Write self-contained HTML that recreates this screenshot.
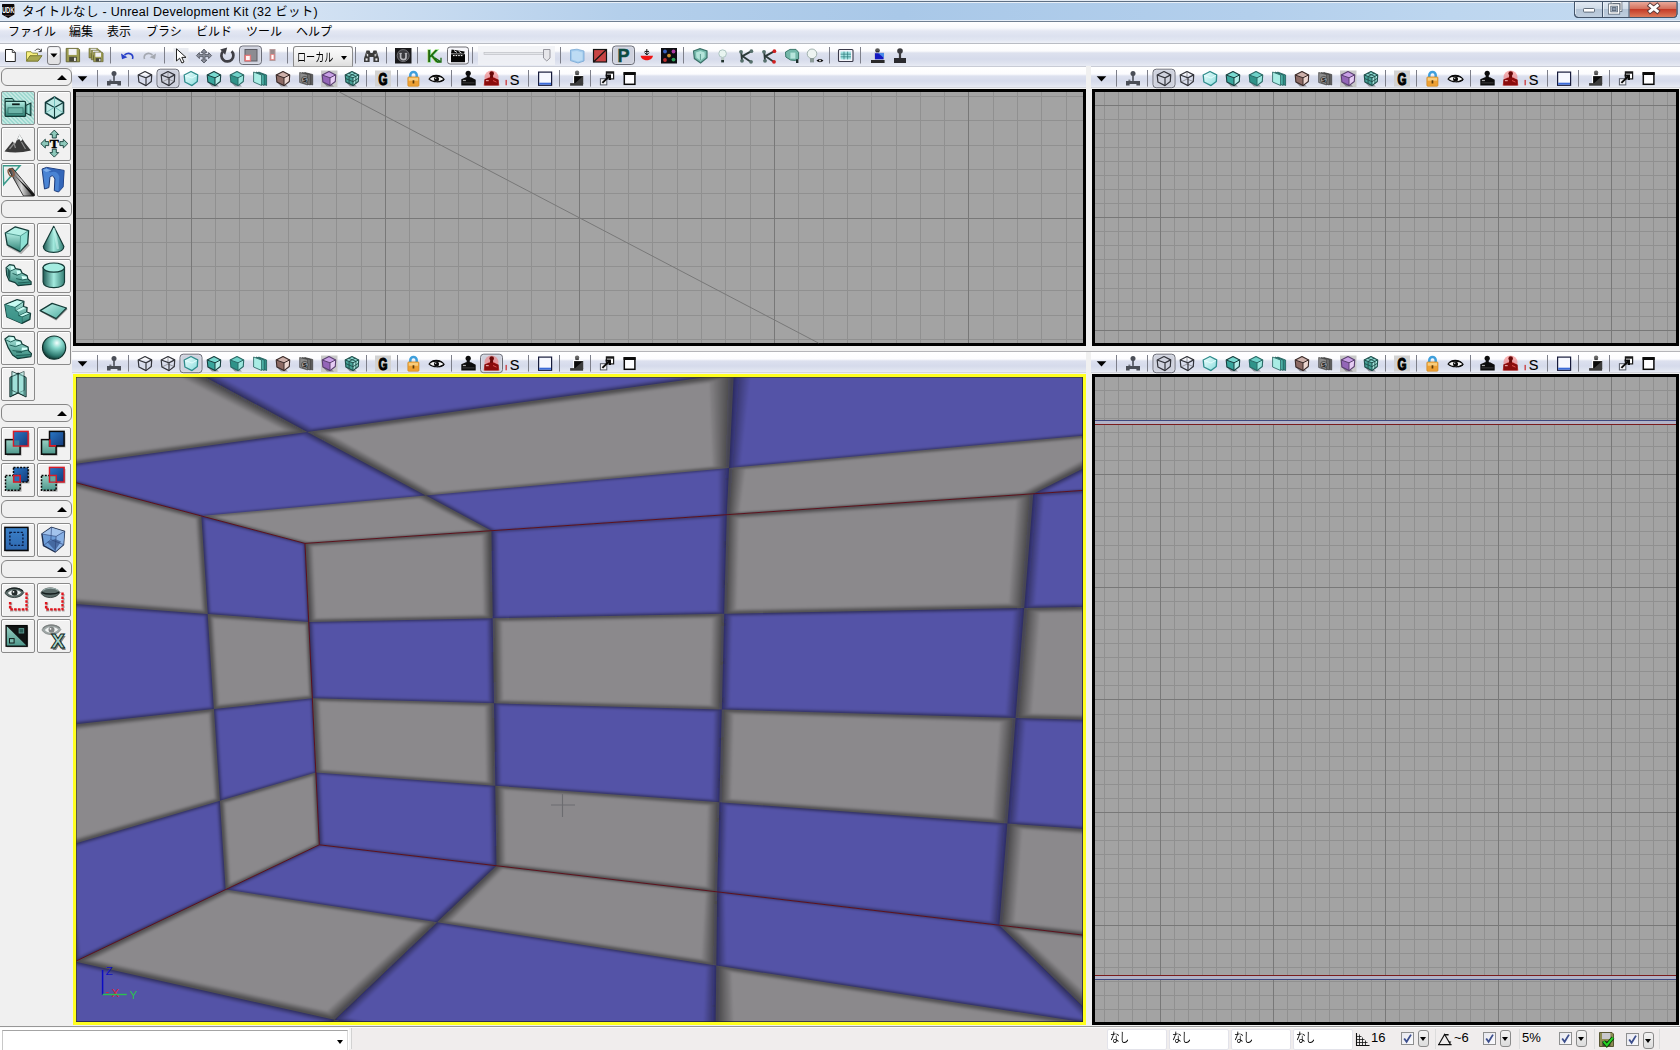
<!DOCTYPE html>
<html lang="ja"><head><meta charset="utf-8"><title>タイトルなし - Unreal Development Kit (32 ビット)</title>
<style>
html,body{margin:0;padding:0}
body{width:1680px;height:1050px;overflow:hidden;position:relative;background:#f0f0f0;font-family:"Liberation Sans","Noto Sans CJK JP",sans-serif;font-size:12px;color:#000}
.abs{position:absolute}
.t{position:absolute;white-space:nowrap;line-height:14px;font-size:12px}
#titlebar{left:0;top:0;width:1680px;height:22px;background:linear-gradient(90deg,#d9e6f5 0px,#d3e2f3 300px,#b4cfeb 620px,#a9c8e8 900px,#b3cfec 1250px,#bdd6ef 1450px,#c4daf0 1680px)}
#menubar{left:0;top:22px;width:1680px;height:21px;background:linear-gradient(180deg,#ffffff 0,#f8f9fc 6px,#e4e8f3 9px,#dce1ef 14px,#e1e6f2 18px,#eef0f7 21px)}
#toolbar{left:0;top:44px;width:1680px;height:22px;background:linear-gradient(180deg,#ffffff 0,#fbfbfd 7px,#dde1ee 9px,#d6dbeb 15px,#dfe3ef 19px,#e8ebf4 22px)}
.vtb{height:21px;background:linear-gradient(180deg,#ffffff 0,#fcfcfe 7px,#dde1ef 9px,#d5daeb 14px,#e0e4f0 18px,#eceef6 21px)}
.hdr{position:absolute;left:1px;width:69px;height:16px;border:1px solid #868686;border-radius:6px;background:#f0f0f0}
.hdr:after{content:"";position:absolute;left:55px;top:6px;border-left:5px solid transparent;border-right:5px solid transparent;border-bottom:5px solid #000}
.lb{position:absolute;width:32px;height:32px;border:1px solid #8a8a8a;border-radius:2px;background:#f1f1f1;box-shadow:inset 1px 1px 0 #fff}
.sbx{position:absolute;top:1029px;height:19px;width:58px;background:#fff;border:1px solid #e3e3ea;border-radius:2px}
.cb{position:absolute;top:1032px;width:11px;height:11px;border:1px solid #8e8f8f;background:linear-gradient(135deg,#e8e8ee,#fafafd)}
.dd{position:absolute;width:9px;height:15px;border:1px solid #8a8a8a;border-radius:3px;background:linear-gradient(180deg,#f4f4f4,#dcdcdc)}
.dd:after{content:"";position:absolute;left:1px;top:6px;border-left:3.5px solid transparent;border-right:3.5px solid transparent;border-top:4px solid #000}
</style></head><body>

<div class="abs" id="titlebar"></div>
<div class="abs" style="left:0;top:0;width:1680px;height:1px;background:#e3ebf4"></div>
<div class="abs" style="left:0;top:1px;width:1666px;height:1px;background:#5f7084"></div>
<div class="abs" style="left:0;top:2px;width:1680px;height:1px;background:#e9f0f8"></div>
<div class="abs" style="left:0;top:20px;width:1680px;height:1px;background:#e4edf7"></div>
<div class="abs" style="left:0;top:21px;width:1680px;height:1px;background:#6f7f91"></div>
<div class="t" id="title" style="left:22px;top:5px;font-size:12.5px;letter-spacing:0.28px">タイトルなし - Unreal Development Kit (32 ビット)</div>
<div class="abs" id="menubar"></div>
<div class="abs" style="left:0;top:43px;width:1680px;height:1px;background:#b9bcc4"></div>
<div class="t menu" id="m0" style="left:8px;top:25px;width:46px">ファイル</div>
<div class="t menu" id="m1" style="left:69px;top:25px;width:24px">編集</div>
<div class="t menu" id="m2" style="left:107px;top:25px;width:24px">表示</div>
<div class="t menu" id="m3" style="left:146px;top:25px;width:35px">ブラシ</div>
<div class="t menu" id="m4" style="left:196px;top:25px;width:35px">ビルド</div>
<div class="t menu" id="m5" style="left:246px;top:25px;width:35px">ツール</div>
<div class="t menu" id="m6" style="left:296px;top:25px;width:35px">ヘルプ</div>
<div class="abs" id="toolbar"></div>
<div class="abs" style="left:0;top:66px;width:1680px;height:1px;background:#c9ccd6"></div>
<div class="abs" style="left:0;top:67px;width:72px;height:959px;background:#f0f0f0"></div>
<div class="hdr" style="top:68px"></div>
<div class="hdr" style="top:200px"></div>
<div class="hdr" style="top:404px"></div>
<div class="hdr" style="top:500px"></div>
<div class="hdr" style="top:560px"></div>
<div class="lb" style="left:1px;top:91px;background:repeating-linear-gradient(45deg,#9fd9d0 0,#9fd9d0 1.4px,#c3e8e2 1.4px,#c3e8e2 2.8px);box-shadow:none"></div>
<div class="lb" style="left:37px;top:91px;"></div>
<div class="lb" style="left:1px;top:127px;"></div>
<div class="lb" style="left:37px;top:127px;"></div>
<div class="lb" style="left:1px;top:163px;"></div>
<div class="lb" style="left:37px;top:163px;"></div>
<div class="lb" style="left:1px;top:223px;"></div>
<div class="lb" style="left:37px;top:223px;"></div>
<div class="lb" style="left:1px;top:259px;"></div>
<div class="lb" style="left:37px;top:259px;"></div>
<div class="lb" style="left:1px;top:295px;"></div>
<div class="lb" style="left:37px;top:295px;"></div>
<div class="lb" style="left:1px;top:331px;"></div>
<div class="lb" style="left:37px;top:331px;"></div>
<div class="lb" style="left:1px;top:367px;"></div>
<div class="lb" style="left:1px;top:427px;"></div>
<div class="lb" style="left:37px;top:427px;"></div>
<div class="lb" style="left:1px;top:463px;"></div>
<div class="lb" style="left:37px;top:463px;"></div>
<div class="lb" style="left:1px;top:523px;"></div>
<div class="lb" style="left:37px;top:523px;"></div>
<div class="lb" style="left:1px;top:583px;"></div>
<div class="lb" style="left:37px;top:583px;"></div>
<div class="lb" style="left:1px;top:619px;"></div>
<div class="lb" style="left:37px;top:619px;"></div>
<div class="abs vtb" style="left:72px;top:67px;width:1015px"></div>
<div class="abs" style="left:72px;top:87px;width:1015px;height:1px;background:#d4d6de"></div>
<div class="abs vtb" style="left:1091px;top:67px;width:589px"></div>
<div class="abs" style="left:1091px;top:87px;width:589px;height:1px;background:#d4d6de"></div>
<div class="abs vtb" style="left:72px;top:352px;width:1015px"></div>
<div class="abs" style="left:72px;top:372px;width:1015px;height:1px;background:#d4d6de"></div>
<div class="abs vtb" style="left:1091px;top:352px;width:589px"></div>
<div class="abs" style="left:1091px;top:372px;width:589px;height:1px;background:#d4d6de"></div>
<div class="abs" style="left:1086px;top:66px;width:5px;height:960px;background:#f0f0f0"></div>
<div class="abs" style="left:72px;top:346px;width:1608px;height:5px;background:#f0f0f0"></div>
<div class="abs" style="left:72px;top:351px;width:1608px;height:1px;background:#b4b4b8"></div>
<svg class="abs" style="left:0;top:0" width="1680" height="1050" viewBox="0 0 1680 1050">
<defs><clipPath id="vp"><rect x="76" y="377" width="1007" height="645"/></clipPath><filter id="shb" filterUnits="userSpaceOnUse" x="66" y="367" width="1027" height="665"><feGaussianBlur stdDeviation="0.9"/></filter>
<linearGradient id="gT" x1="0" y1="0" x2="1" y2="1"><stop offset="0" stop-color="#c8f8f0"/><stop offset="1" stop-color="#4aa89c"/></linearGradient>
<linearGradient id="gTh" x1="0" y1="0" x2="1" y2="0"><stop offset="0" stop-color="#1f5a54"/><stop offset=".5" stop-color="#a2eade"/><stop offset="1" stop-color="#357f75"/></linearGradient>
<linearGradient id="gTv" x1="0" y1="0" x2="0" y2="1"><stop offset="0" stop-color="#b4eee4"/><stop offset="1" stop-color="#2f8276"/></linearGradient>
<radialGradient id="gSph" cx=".62" cy=".3" r=".75"><stop offset="0" stop-color="#f4fffe"/><stop offset=".3" stop-color="#86d8cc"/><stop offset=".75" stop-color="#2f7a70"/><stop offset="1" stop-color="#0c2c28"/></radialGradient>
<linearGradient id="gB" x1="0" y1="0" x2="1" y2="1"><stop offset="0" stop-color="#2a78c8"/><stop offset="1" stop-color="#143a78"/></linearGradient>
<linearGradient id="gB2" x1="0" y1="0" x2="0" y2="1"><stop offset="0" stop-color="#3a80c8"/><stop offset="1" stop-color="#2f68b0"/></linearGradient>
<linearGradient id="gTe" x1="0" y1="0" x2="0" y2="1"><stop offset="0" stop-color="#9ad0c4"/><stop offset="1" stop-color="#4e988c"/></linearGradient>
<linearGradient id="gLit" x1="0" y1="0" x2="1" y2="1"><stop offset="0" stop-color="#f0ffff"/><stop offset="1" stop-color="#8adcdc"/></linearGradient>
<linearGradient id="gClose" x1="0" y1="0" x2="0" y2="1"><stop offset="0" stop-color="#e9a99a"/><stop offset=".45" stop-color="#d4705c"/><stop offset=".5" stop-color="#c43c28"/><stop offset="1" stop-color="#dc7a5a"/></linearGradient>
<linearGradient id="gWb" x1="0" y1="0" x2="0" y2="1"><stop offset="0" stop-color="#e3ebf4"/><stop offset=".45" stop-color="#cfdbe8"/><stop offset=".5" stop-color="#b4c4d6"/><stop offset="1" stop-color="#c0cfdf"/></linearGradient>
<linearGradient id="gMet" x1="0" y1="0" x2="1" y2="0"><stop offset="0" stop-color="#303030"/><stop offset=".5" stop-color="#d8d8d8"/><stop offset="1" stop-color="#202020"/></linearGradient>
<filter id="bl1"><feGaussianBlur stdDeviation="0.6"/></filter>
<filter id="bl2"><feGaussianBlur stdDeviation="1.1"/></filter>
</defs>
<rect x="73" y="89" width="1013" height="257" fill="#000"/><rect x="76" y="92" width="1007" height="251" fill="#a3a3a3"/>
<path d="M93.5 92V343M118.5 92V343M142.5 92V343M166.5 92V343M215.5 92V343M239.5 92V343M263.5 92V343M288.5 92V343M312.5 92V343M336.5 92V343M361.5 92V343M409.5 92V343M434.5 92V343M458.5 92V343M482.5 92V343M507.5 92V343M531.5 92V343M555.5 92V343M604.5 92V343M628.5 92V343M652.5 92V343M677.5 92V343M701.5 92V343M725.5 92V343M750.5 92V343M798.5 92V343M823.5 92V343M847.5 92V343M871.5 92V343M896.5 92V343M920.5 92V343M944.5 92V343M993.5 92V343M1017.5 92V343M1041.5 92V343M1066.5 92V343M76 96.5H1083M76 120.5H1083M76 145.5H1083M76 169.5H1083M76 193.5H1083M76 242.5H1083M76 266.5H1083M76 290.5H1083M76 315.5H1083M76 339.5H1083" stroke="#909090" stroke-width="1" fill="none" shape-rendering="crispEdges"/>
<path d="M191.5 92V343M385.5 92V343M579.5 92V343M774.5 92V343M968.5 92V343M76 218.5H1083" stroke="#787878" stroke-width="1" fill="none" shape-rendering="crispEdges"/>
<line x1="338.9" y1="91.8" x2="818.4" y2="343" stroke="#787878" stroke-width="1"/>
<rect x="1092" y="89" width="587" height="257" fill="#000"/><rect x="1095" y="92" width="581" height="251" fill="#a3a3a3"/>
<path d="M1104.5 92V343M1118.5 92V343M1132.5 92V343M1146.5 92V343M1174.5 92V343M1188.5 92V343M1202.5 92V343M1216.5 92V343M1231.5 92V343M1245.5 92V343M1259.5 92V343M1287.5 92V343M1301.5 92V343M1315.5 92V343M1329.5 92V343M1343.5 92V343M1357.5 92V343M1371.5 92V343M1399.5 92V343M1414.5 92V343M1428.5 92V343M1442.5 92V343M1456.5 92V343M1470.5 92V343M1484.5 92V343M1512.5 92V343M1526.5 92V343M1540.5 92V343M1554.5 92V343M1568.5 92V343M1583.5 92V343M1597.5 92V343M1625.5 92V343M1639.5 92V343M1653.5 92V343M1667.5 92V343M1095 119.5H1676M1095 133.5H1676M1095 147.5H1676M1095 161.5H1676M1095 175.5H1676M1095 189.5H1676M1095 203.5H1676M1095 231.5H1676M1095 245.5H1676M1095 259.5H1676M1095 273.5H1676M1095 288.5H1676M1095 302.5H1676M1095 316.5H1676" stroke="#909090" stroke-width="1" fill="none" shape-rendering="crispEdges"/>
<path d="M1160.5 92V343M1273.5 92V343M1385.5 92V343M1498.5 92V343M1611.5 92V343M1095 105.5H1676M1095 217.5H1676M1095 330.5H1676" stroke="#787878" stroke-width="1" fill="none" shape-rendering="crispEdges"/>
<rect x="1092" y="374" width="587" height="651" fill="#000"/><rect x="1095" y="377" width="581" height="645" fill="#a3a3a3"/>
<path d="M1104.5 377V1022M1118.5 377V1022M1132.5 377V1022M1146.5 377V1022M1174.5 377V1022M1188.5 377V1022M1202.5 377V1022M1216.5 377V1022M1231.5 377V1022M1245.5 377V1022M1259.5 377V1022M1287.5 377V1022M1301.5 377V1022M1315.5 377V1022M1329.5 377V1022M1343.5 377V1022M1357.5 377V1022M1371.5 377V1022M1399.5 377V1022M1414.5 377V1022M1428.5 377V1022M1442.5 377V1022M1456.5 377V1022M1470.5 377V1022M1484.5 377V1022M1512.5 377V1022M1526.5 377V1022M1540.5 377V1022M1554.5 377V1022M1568.5 377V1022M1583.5 377V1022M1597.5 377V1022M1625.5 377V1022M1639.5 377V1022M1653.5 377V1022M1667.5 377V1022M1095 390.5H1676M1095 404.5H1676M1095 418.5H1676M1095 432.5H1676M1095 446.5H1676M1095 460.5H1676M1095 488.5H1676M1095 502.5H1676M1095 516.5H1676M1095 531.5H1676M1095 545.5H1676M1095 559.5H1676M1095 573.5H1676M1095 601.5H1676M1095 615.5H1676M1095 629.5H1676M1095 643.5H1676M1095 657.5H1676M1095 671.5H1676M1095 685.5H1676M1095 714.5H1676M1095 728.5H1676M1095 742.5H1676M1095 756.5H1676M1095 770.5H1676M1095 784.5H1676M1095 798.5H1676M1095 826.5H1676M1095 840.5H1676M1095 854.5H1676M1095 868.5H1676M1095 883.5H1676M1095 897.5H1676M1095 911.5H1676M1095 939.5H1676M1095 953.5H1676M1095 967.5H1676M1095 981.5H1676M1095 995.5H1676M1095 1009.5H1676" stroke="#909090" stroke-width="1" fill="none" shape-rendering="crispEdges"/>
<path d="M1160.5 377V1022M1273.5 377V1022M1385.5 377V1022M1498.5 377V1022M1611.5 377V1022M1095 474.5H1676M1095 587.5H1676M1095 699.5H1676M1095 812.5H1676M1095 925.5H1676" stroke="#787878" stroke-width="1" fill="none" shape-rendering="crispEdges"/>
<rect x="1095" y="421" width="581" height="3" fill="#b3b3c6"/><rect x="1095" y="420" width="581" height="1" fill="#3f487e"/><rect x="1095" y="424" width="581" height="1" fill="#7a1c1c"/>
<rect x="1095" y="976" width="581" height="3" fill="#b3b3c6"/><rect x="1095" y="975" width="581" height="1" fill="#7a1c1c"/><rect x="1095" y="979" width="581" height="1" fill="#3f487e"/>
<rect x="73" y="374" width="1013" height="651" fill="#ffff20"/>
<g clip-path="url(#vp)">
<path d="M305.0 543.4 L4593.5 251.4 L18327.3 -1173.7 L-6195.5 -1177.9Z" fill="#8b898c"/>
<path d="M201.3 516.0 L425.8 495.5 L307.3 431.9 L28.4 470.2ZM491.4 530.7 L726.8 514.7 L729.1 467.9 L425.8 495.5ZM307.3 431.9 L733.8 373.4 L748.3 82.5 L28.8 282.5ZM729.1 467.9 L1161.5 428.5 L1467.7 272.7 L733.8 373.4ZM1033.2 493.8 L1448.6 465.5 L1827.6 367.9 L1161.5 428.5Z" fill="#5453a7"/>
<path d="M319.3 844.8 L3916.1 1270.0 L18197.3 4025.8 L-6325.6 4021.5Z" fill="#8b898c"/>
<path d="M319.3 844.8 L496.5 865.7 L437.1 922.3 L225.7 889.6ZM74.9 961.6 L334.6 1019.8 L115.4 1228.2 L-208.2 1097.0ZM437.1 922.3 L716.3 965.5 L714.7 1104.9 L334.6 1019.8ZM717.1 891.8 L999.4 925.2 L1102.2 1025.2 L716.3 965.5Z" fill="#5453a7"/>
<path d="M305.0 543.4 L-6195.5 -1177.9 L-6325.6 4021.5 L319.3 844.8Z" fill="#8b898c"/>
<path d="M305.0 543.4 L201.3 516.0 L207.7 614.1 L308.7 621.9ZM312.3 698.2 L213.9 709.0 L219.9 800.8 L315.9 772.5ZM207.7 614.1 L40.9 601.4 L52.7 726.8 L213.9 709.0ZM219.9 800.8 L64.1 846.7 L74.9 961.6 L225.7 889.6Z" fill="#5453a7"/>
<path d="M305.0 543.4 L4593.5 251.4 L3916.1 1270.0 L319.3 844.8Z" fill="#8b898c"/>
<path d="M308.7 621.9 L492.7 618.3 L494.0 703.3 L312.3 698.2ZM315.9 772.5 L495.3 785.7 L496.5 865.7 L319.3 844.8ZM491.4 530.7 L726.8 514.7 L724.2 613.8 L492.7 618.3ZM494.0 703.3 L721.8 709.6 L719.4 802.2 L495.3 785.7ZM724.2 613.8 L1024.2 608.0 L1015.6 717.9 L721.8 709.6ZM719.4 802.2 L1007.4 823.5 L999.4 925.2 L717.1 891.8ZM1033.2 493.8 L1448.6 465.5 L1428.5 600.3 L1024.2 608.0ZM1015.6 717.9 L1409.2 728.9 L1390.9 851.8 L1007.4 823.5Z" fill="#5453a7"/>
<g filter="url(#shb)">
<path d="M305.0 543.4 L491.4 530.7 L425.8 495.5 L201.3 516.0ZM305.0 543.4 L491.1 530.7 L425.6 495.6 L201.6 516.0ZM28.4 470.2 L307.3 431.9 L28.8 282.5 L-317.1 378.7ZM28.4 470.1 L306.7 431.9 L28.8 282.9 L-316.2 378.8ZM425.8 495.5 L729.1 467.9 L733.8 373.4 L307.3 431.9ZM426.0 495.4 L728.7 467.9 L733.2 373.6 L307.8 432.0ZM726.8 514.7 L1033.2 493.8 L1161.5 428.5 L729.1 467.9ZM727.1 514.6 L1032.9 493.8 L1160.7 428.7 L729.5 467.9ZM733.8 373.4 L1467.7 272.7 L3158.1 -587.6 L748.3 82.5ZM734.4 373.2 L1467.1 272.6 L3146.6 -583.1 L749.5 82.8ZM225.7 889.6 L437.1 922.3 L334.6 1019.8 L74.9 961.6ZM225.8 889.6 L436.7 922.3 L334.4 1019.6 L75.4 961.6ZM496.5 865.7 L717.1 891.8 L716.3 965.5 L437.1 922.3ZM496.7 865.8 L716.9 891.9 L715.9 965.3 L437.4 922.2ZM334.6 1019.8 L714.7 1104.9 L710.5 1469.4 L115.4 1228.2ZM334.7 1020.0 L714.2 1105.0 L709.6 1468.4 L116.2 1228.0ZM716.3 965.5 L1102.2 1025.2 L1324.5 1241.5 L714.7 1104.9ZM716.6 965.6 L1101.8 1025.3 L1323.3 1240.9 L715.2 1104.8ZM999.4 925.2 L1373.3 969.4 L1670.4 1113.1 L1102.2 1025.2ZM999.8 925.3 L1373.1 969.5 L1669.2 1112.8 L1102.5 1025.1ZM308.7 621.9 L207.7 614.1 L213.9 709.0 L312.3 698.2ZM308.6 621.9 L207.8 614.2 L214.0 708.9 L312.2 698.1ZM315.9 772.5 L219.9 800.8 L225.7 889.6 L319.3 844.8ZM315.8 772.6 L220.0 800.8 L225.8 889.4 L319.2 844.8ZM201.3 516.0 L28.4 470.2 L40.9 601.4 L207.7 614.1ZM201.1 516.0 L28.7 470.4 L41.1 601.3 L207.5 614.0ZM213.9 709.0 L52.7 726.8 L64.1 846.7 L219.9 800.8ZM213.8 709.1 L53.0 726.9 L64.3 846.5 L219.8 800.7ZM64.1 846.7 L-232.8 934.3 L-208.2 1097.0 L74.9 961.6ZM63.9 846.9 L-232.3 934.3 L-207.8 1096.6 L74.7 961.6ZM305.0 543.4 L491.4 530.7 L492.7 618.3 L308.7 621.9ZM305.1 543.5 L491.2 530.8 L492.5 618.2 L308.9 621.8ZM312.3 698.2 L494.0 703.3 L495.3 785.7 L315.9 772.5ZM312.5 698.3 L493.8 703.3 L495.1 785.6 L316.0 772.4ZM492.7 618.3 L724.2 613.8 L721.8 709.6 L494.0 703.3ZM493.0 618.4 L724.0 613.9 L721.5 709.5 L494.3 703.2ZM495.3 785.7 L719.4 802.2 L717.1 891.8 L496.5 865.7ZM495.5 785.8 L719.1 802.3 L716.9 891.7 L496.7 865.7ZM726.8 514.7 L1033.2 493.8 L1024.2 608.0 L724.2 613.8ZM727.1 514.8 L1032.8 494.0 L1023.9 607.9 L724.5 613.7ZM721.8 709.6 L1015.6 717.9 L1007.4 823.5 L719.4 802.2ZM722.1 709.7 L1015.3 718.0 L1007.0 823.4 L719.7 802.2ZM1024.2 608.0 L1428.5 600.3 L1409.2 728.9 L1015.6 717.9ZM1024.6 608.2 L1427.9 600.4 L1408.8 728.7 L1016.0 717.7ZM1007.4 823.5 L1390.9 851.8 L1373.3 969.4 L999.4 925.2ZM1007.7 823.6 L1390.4 851.9 L1372.9 969.2 L999.7 925.1Z" fill="#0a0a16" fill-opacity="0.095" fill-rule="evenodd"/>
<path d="M201.3 516.0 L425.8 495.5 L307.3 431.9 L28.4 470.2ZM201.3 515.9 L425.5 495.5 L307.2 432.0 L28.8 470.2ZM491.4 530.7 L726.8 514.7 L729.1 467.9 L425.8 495.5ZM491.5 530.7 L726.6 514.7 L728.9 468.0 L426.0 495.5ZM307.3 431.9 L733.8 373.4 L748.3 82.5 L28.8 282.5ZM307.4 431.8 L733.4 373.4 L747.5 83.1 L29.5 282.6ZM729.1 467.9 L1161.5 428.5 L1467.7 272.7 L733.8 373.4ZM729.4 467.8 L1161.2 428.5 L1466.6 273.0 L734.2 373.5ZM1033.2 493.8 L1448.6 465.5 L1827.6 367.9 L1161.5 428.5ZM1033.5 493.8 L1448.4 465.5 L1826.5 368.1 L1161.7 428.6ZM319.3 844.8 L496.5 865.7 L437.1 922.3 L225.7 889.6ZM319.4 844.8 L496.3 865.8 L437.0 922.2 L225.9 889.5ZM74.9 961.6 L334.6 1019.8 L115.4 1228.2 L-208.2 1097.0ZM75.0 961.7 L334.2 1019.8 L115.4 1227.8 L-207.7 1096.9ZM437.1 922.3 L716.3 965.5 L714.7 1104.9 L334.6 1019.8ZM437.2 922.3 L716.0 965.5 L714.3 1104.7 L334.9 1019.7ZM717.1 891.8 L999.4 925.2 L1102.2 1025.2 L716.3 965.5ZM717.3 891.9 L999.2 925.2 L1101.7 1025.0 L716.5 965.4ZM305.0 543.4 L201.3 516.0 L207.7 614.1 L308.7 621.9ZM304.9 543.5 L201.4 516.1 L207.8 614.1 L308.6 621.8ZM312.3 698.2 L213.9 709.0 L219.9 800.8 L315.9 772.5ZM312.3 698.2 L214.0 709.1 L220.0 800.7 L315.8 772.4ZM207.7 614.1 L40.9 601.4 L52.7 726.8 L213.9 709.0ZM207.6 614.2 L41.0 601.5 L52.9 726.6 L213.8 708.9ZM219.9 800.8 L64.1 846.7 L74.9 961.6 L225.7 889.6ZM219.8 800.9 L64.2 846.8 L75.1 961.5 L225.6 889.5ZM308.7 621.9 L492.7 618.3 L494.0 703.3 L312.3 698.2ZM308.8 621.9 L492.6 618.4 L493.9 703.2 L312.4 698.1ZM315.9 772.5 L495.3 785.7 L496.5 865.7 L319.3 844.8ZM316.0 772.5 L495.1 785.7 L496.4 865.7 L319.4 844.8ZM491.4 530.7 L726.8 514.7 L724.2 613.8 L492.7 618.3ZM491.6 530.8 L726.6 514.8 L724.1 613.8 L492.9 618.2ZM494.0 703.3 L721.8 709.6 L719.4 802.2 L495.3 785.7ZM494.2 703.3 L721.6 709.7 L719.2 802.2 L495.4 785.6ZM724.2 613.8 L1024.2 608.0 L1015.6 717.9 L721.8 709.6ZM724.4 613.9 L1024.0 608.1 L1015.4 717.8 L722.0 709.6ZM719.4 802.2 L1007.4 823.5 L999.4 925.2 L717.1 891.8ZM719.6 802.3 L1007.1 823.5 L999.2 925.1 L717.3 891.8ZM1033.2 493.8 L1448.6 465.5 L1428.5 600.3 L1024.2 608.0ZM1033.4 493.9 L1448.2 465.7 L1428.1 600.2 L1024.5 608.0ZM1015.6 717.9 L1409.2 728.9 L1390.9 851.8 L1007.4 823.5ZM1015.9 717.9 L1408.9 728.9 L1390.6 851.7 L1007.6 823.4Z" fill="#06061c" fill-opacity="0.075" fill-rule="evenodd"/>
<path d="M305.0 543.4 L491.4 530.7 L425.8 495.5 L201.3 516.0ZM305.2 543.3 L490.5 530.7 L425.2 495.8 L202.4 516.0ZM28.4 470.2 L307.3 431.9 L28.8 282.5 L-317.1 378.7ZM28.4 469.9 L305.5 431.8 L28.8 283.9 L-314.4 378.9ZM425.8 495.5 L729.1 467.9 L733.8 373.4 L307.3 431.9ZM426.4 495.3 L727.9 467.8 L731.9 374.2 L309.0 432.1ZM726.8 514.7 L1033.2 493.8 L1161.5 428.5 L729.1 467.9ZM727.7 514.5 L1032.3 493.8 L1159.0 429.0 L730.3 468.0ZM733.8 373.4 L1467.7 272.7 L3158.1 -587.6 L748.3 82.5ZM735.7 372.7 L1466.0 272.3 L3121.0 -572.9 L752.1 83.5ZM225.7 889.6 L437.1 922.3 L334.6 1019.8 L74.9 961.6ZM225.9 889.8 L436.0 922.4 L334.0 1019.1 L76.4 961.5ZM496.5 865.7 L717.1 891.8 L716.3 965.5 L437.1 922.3ZM497.0 866.0 L716.3 891.9 L715.1 965.0 L438.2 922.1ZM334.6 1019.8 L714.7 1104.9 L710.5 1469.4 L115.4 1228.2ZM335.1 1020.5 L713.0 1105.2 L707.5 1466.0 L118.1 1227.6ZM716.3 965.5 L1102.2 1025.2 L1324.5 1241.5 L714.7 1104.9ZM717.4 966.0 L1101.1 1025.4 L1320.5 1239.7 L716.3 1104.6ZM999.4 925.2 L1373.3 969.4 L1670.4 1113.1 L1102.2 1025.2ZM1000.8 925.6 L1372.5 969.6 L1666.4 1112.0 L1103.3 1025.0ZM308.7 621.9 L207.7 614.1 L213.9 709.0 L312.3 698.2ZM308.4 622.1 L208.1 614.5 L214.3 708.6 L312.0 697.9ZM315.9 772.5 L219.9 800.8 L225.7 889.6 L319.3 844.8ZM315.6 772.8 L220.3 801.0 L226.1 889.1 L319.0 844.7ZM201.3 516.0 L28.4 470.2 L40.9 601.4 L207.7 614.1ZM200.8 516.2 L29.3 470.9 L41.6 601.0 L207.2 613.8ZM213.9 709.0 L52.7 726.8 L64.1 846.7 L219.9 800.8ZM213.5 709.4 L53.5 727.1 L64.7 846.1 L219.5 800.6ZM64.1 846.7 L-232.8 934.3 L-208.2 1097.0 L74.9 961.6ZM63.4 847.3 L-231.2 934.4 L-206.8 1095.7 L74.2 961.6ZM305.0 543.4 L491.4 530.7 L492.7 618.3 L308.7 621.9ZM305.6 543.7 L490.7 531.1 L492.0 618.0 L309.3 621.6ZM312.3 698.2 L494.0 703.3 L495.3 785.7 L315.9 772.5ZM312.9 698.4 L493.3 703.5 L494.6 785.4 L316.4 772.2ZM492.7 618.3 L724.2 613.8 L721.8 709.6 L494.0 703.3ZM493.5 618.6 L723.3 614.2 L720.9 709.3 L494.7 703.0ZM495.3 785.7 L719.4 802.2 L717.1 891.8 L496.5 865.7ZM496.0 786.0 L718.5 802.5 L716.3 891.4 L497.2 865.5ZM726.8 514.7 L1033.2 493.8 L1024.2 608.0 L724.2 613.8ZM727.7 515.0 L1031.9 494.3 L1023.1 607.7 L725.2 613.5ZM721.8 709.6 L1015.6 717.9 L1007.4 823.5 L719.4 802.2ZM722.7 710.0 L1014.4 718.2 L1006.2 823.0 L720.3 802.0ZM1024.2 608.0 L1428.5 600.3 L1409.2 728.9 L1015.6 717.9ZM1025.4 608.4 L1426.7 600.7 L1407.7 728.4 L1016.8 717.5ZM1007.4 823.5 L1390.9 851.8 L1373.3 969.4 L999.4 925.2ZM1008.5 823.9 L1389.3 852.1 L1371.9 968.8 L1000.5 925.0Z" fill="#0a0a16" fill-opacity="0.095" fill-rule="evenodd"/>
<path d="M201.3 516.0 L425.8 495.5 L307.3 431.9 L28.4 470.2ZM201.4 515.8 L425.0 495.5 L306.9 432.3 L29.5 470.3ZM491.4 530.7 L726.8 514.7 L729.1 467.9 L425.8 495.5ZM491.8 530.6 L726.2 514.7 L728.3 468.1 L426.6 495.6ZM307.3 431.9 L733.8 373.4 L748.3 82.5 L28.8 282.5ZM307.7 431.6 L732.6 373.3 L745.7 84.6 L31.0 282.8ZM729.1 467.9 L1161.5 428.5 L1467.7 272.7 L733.8 373.4ZM729.9 467.7 L1160.7 428.4 L1464.1 273.6 L735.1 373.6ZM1033.2 493.8 L1448.6 465.5 L1827.6 367.9 L1161.5 428.5ZM1034.2 493.7 L1448.0 465.5 L1824.2 368.4 L1162.3 428.6ZM319.3 844.8 L496.5 865.7 L437.1 922.3 L225.7 889.6ZM319.5 844.9 L495.9 865.8 L436.7 922.0 L226.4 889.5ZM74.9 961.6 L334.6 1019.8 L115.4 1228.2 L-208.2 1097.0ZM75.0 962.0 L333.5 1019.9 L115.2 1227.0 L-206.6 1096.8ZM437.1 922.3 L716.3 965.5 L714.7 1104.9 L334.6 1019.8ZM437.5 922.5 L715.5 965.6 L713.6 1104.2 L335.6 1019.6ZM717.1 891.8 L999.4 925.2 L1102.2 1025.2 L716.3 965.5ZM717.7 892.0 L998.8 925.3 L1100.8 1024.7 L717.0 965.4ZM305.0 543.4 L201.3 516.0 L207.7 614.1 L308.7 621.9ZM304.8 543.6 L201.6 516.3 L208.0 613.9 L308.5 621.7ZM312.3 698.2 L213.9 709.0 L219.9 800.8 L315.9 772.5ZM312.2 698.4 L214.2 709.2 L220.2 800.5 L315.7 772.3ZM207.7 614.1 L40.9 601.4 L52.7 726.8 L213.9 709.0ZM207.4 614.3 L41.4 601.7 L53.2 726.4 L213.6 708.8ZM219.9 800.8 L64.1 846.7 L74.9 961.6 L225.7 889.6ZM219.6 801.1 L64.6 846.9 L75.4 961.1 L225.4 889.5ZM308.7 621.9 L492.7 618.3 L494.0 703.3 L312.3 698.2ZM309.1 622.0 L492.3 618.5 L493.6 703.0 L312.7 698.0ZM315.9 772.5 L495.3 785.7 L496.5 865.7 L319.3 844.8ZM316.3 772.7 L494.8 785.9 L496.0 865.5 L319.7 844.7ZM491.4 530.7 L726.8 514.7 L724.2 613.8 L492.7 618.3ZM491.9 530.9 L726.2 515.0 L723.6 613.6 L493.2 618.1ZM494.0 703.3 L721.8 709.6 L719.4 802.2 L495.3 785.7ZM494.5 703.5 L721.2 709.8 L718.8 802.0 L495.7 785.5ZM724.2 613.8 L1024.2 608.0 L1015.6 717.9 L721.8 709.6ZM724.8 614.1 L1023.4 608.3 L1014.9 717.6 L722.4 709.4ZM719.4 802.2 L1007.4 823.5 L999.4 925.2 L717.1 891.8ZM720.0 802.5 L1006.6 823.7 L998.7 924.9 L717.7 891.7ZM1033.2 493.8 L1448.6 465.5 L1428.5 600.3 L1024.2 608.0ZM1034.0 494.0 L1447.4 465.9 L1427.4 600.0 L1025.1 607.8ZM1015.6 717.9 L1409.2 728.9 L1390.9 851.8 L1007.4 823.5ZM1016.4 718.1 L1408.1 729.1 L1389.9 851.4 L1008.1 823.3Z" fill="#06061c" fill-opacity="0.075" fill-rule="evenodd"/>
<path d="M305.0 543.4 L491.4 530.7 L425.8 495.5 L201.3 516.0ZM305.5 543.2 L489.6 530.6 L424.6 496.0 L203.5 516.1ZM28.4 470.2 L307.3 431.9 L28.8 282.5 L-317.1 378.7ZM28.4 469.6 L303.8 431.6 L28.8 285.2 L-311.7 379.2ZM425.8 495.5 L729.1 467.9 L733.8 373.4 L307.3 431.9ZM427.0 495.0 L726.7 467.7 L730.0 374.9 L310.8 432.2ZM726.8 514.7 L1033.2 493.8 L1161.5 428.5 L729.1 467.9ZM728.6 514.3 L1031.4 493.7 L1156.6 429.5 L731.6 468.1ZM733.8 373.4 L1467.7 272.7 L3158.1 -587.6 L748.3 82.5ZM737.6 371.9 L1464.3 271.8 L3085.1 -558.7 L755.8 84.4ZM225.7 889.6 L437.1 922.3 L334.6 1019.8 L74.9 961.6ZM226.2 890.1 L434.9 922.5 L333.4 1018.4 L77.8 961.3ZM496.5 865.7 L717.1 891.8 L716.3 965.5 L437.1 922.3ZM497.5 866.2 L715.4 892.0 L714.0 964.5 L439.3 922.0ZM334.6 1019.8 L714.7 1104.9 L710.5 1469.4 L115.4 1228.2ZM335.7 1021.2 L711.4 1105.6 L704.7 1462.5 L120.7 1227.1ZM716.3 965.5 L1102.2 1025.2 L1324.5 1241.5 L714.7 1104.9ZM718.5 966.5 L1099.9 1025.6 L1316.6 1237.9 L717.9 1104.2ZM999.4 925.2 L1373.3 969.4 L1670.4 1113.1 L1102.2 1025.2ZM1002.1 926.0 L1371.7 969.7 L1662.5 1110.9 L1104.4 1024.7ZM308.7 621.9 L207.7 614.1 L213.9 709.0 L312.3 698.2ZM308.2 622.3 L208.6 614.9 L214.7 708.3 L311.8 697.7ZM315.9 772.5 L219.9 800.8 L225.7 889.6 L319.3 844.8ZM315.4 773.1 L220.8 801.1 L226.5 888.6 L318.8 844.5ZM201.3 516.0 L28.4 470.2 L40.9 601.4 L207.7 614.1ZM200.4 516.4 L30.1 471.6 L42.3 600.6 L206.8 613.4ZM213.9 709.0 L52.7 726.8 L64.1 846.7 L219.9 800.8ZM213.1 709.8 L54.3 727.4 L65.4 845.5 L219.0 800.4ZM64.1 846.7 L-232.8 934.3 L-208.2 1097.0 L74.9 961.6ZM62.7 848.0 L-229.7 934.6 L-205.5 1094.5 L73.5 961.5ZM305.0 543.4 L491.4 530.7 L492.7 618.3 L308.7 621.9ZM306.1 543.9 L490.0 531.4 L491.3 617.7 L309.8 621.3ZM312.3 698.2 L494.0 703.3 L495.3 785.7 L315.9 772.5ZM313.5 698.7 L492.6 703.8 L493.9 785.0 L317.0 772.0ZM492.7 618.3 L724.2 613.8 L721.8 709.6 L494.0 703.3ZM494.2 618.9 L722.4 614.5 L720.0 708.9 L495.4 702.7ZM495.3 785.7 L719.4 802.2 L717.1 891.8 L496.5 865.7ZM496.7 786.4 L717.6 802.7 L715.4 891.0 L497.9 865.4ZM726.8 514.7 L1033.2 493.8 L1024.2 608.0 L724.2 613.8ZM728.6 515.3 L1030.7 494.8 L1021.9 607.3 L726.1 613.1ZM721.8 709.6 L1015.6 717.9 L1007.4 823.5 L719.4 802.2ZM723.6 710.3 L1013.2 718.5 L1005.1 822.6 L721.2 801.7ZM1024.2 608.0 L1428.5 600.3 L1409.2 728.9 L1015.6 717.9ZM1026.6 608.8 L1425.0 601.2 L1406.2 727.9 L1018.0 717.2ZM1007.4 823.5 L1390.9 851.8 L1373.3 969.4 L999.4 925.2ZM1009.6 824.4 L1387.7 852.4 L1370.4 968.2 L1001.7 924.8Z" fill="#0a0a16" fill-opacity="0.095" fill-rule="evenodd"/>
<path d="M201.3 516.0 L425.8 495.5 L307.3 431.9 L28.4 470.2ZM201.6 515.7 L424.2 495.4 L306.5 432.6 L30.6 470.3ZM491.4 530.7 L726.8 514.7 L729.1 467.9 L425.8 495.5ZM492.1 530.5 L725.6 514.6 L727.4 468.3 L427.4 495.6ZM307.3 431.9 L733.8 373.4 L748.3 82.5 L28.8 282.5ZM308.1 431.3 L731.3 373.1 L743.1 86.6 L33.1 283.1ZM729.1 467.9 L1161.5 428.5 L1467.7 272.7 L733.8 373.4ZM730.8 467.5 L1159.9 428.3 L1460.7 274.6 L736.3 373.7ZM1033.2 493.8 L1448.6 465.5 L1827.6 367.9 L1161.5 428.5ZM1035.3 493.5 L1447.5 465.4 L1821.0 368.9 L1163.1 428.7ZM319.3 844.8 L496.5 865.7 L437.1 922.3 L225.7 889.6ZM319.7 845.0 L495.4 865.8 L436.3 921.8 L227.1 889.4ZM74.9 961.6 L334.6 1019.8 L115.4 1228.2 L-208.2 1097.0ZM75.0 962.3 L332.5 1020.1 L115.1 1225.9 L-205.1 1096.5ZM437.1 922.3 L716.3 965.5 L714.7 1104.9 L334.6 1019.8ZM437.8 922.8 L714.8 965.7 L712.5 1103.5 L336.6 1019.5ZM717.1 891.8 L999.4 925.2 L1102.2 1025.2 L716.3 965.5ZM718.3 892.2 L998.2 925.4 L1099.4 1024.2 L717.8 965.3ZM305.0 543.4 L201.3 516.0 L207.7 614.1 L308.7 621.9ZM304.6 543.7 L201.9 516.6 L208.2 613.7 L308.3 621.5ZM312.3 698.2 L213.9 709.0 L219.9 800.8 L315.9 772.5ZM312.0 698.6 L214.5 709.4 L220.4 800.2 L315.5 772.2ZM207.7 614.1 L40.9 601.4 L52.7 726.8 L213.9 709.0ZM207.1 614.5 L41.9 602.0 L53.7 726.1 L213.3 708.6ZM219.9 800.8 L64.1 846.7 L74.9 961.6 L225.7 889.6ZM219.4 801.3 L65.1 847.0 L75.8 960.7 L225.1 889.4ZM308.7 621.9 L492.7 618.3 L494.0 703.3 L312.3 698.2ZM309.5 622.2 L491.8 618.7 L493.1 702.8 L313.1 697.8ZM315.9 772.5 L495.3 785.7 L496.5 865.7 L319.3 844.8ZM316.6 772.8 L494.4 786.0 L495.6 865.3 L320.1 844.5ZM491.4 530.7 L726.8 514.7 L724.2 613.8 L492.7 618.3ZM492.4 531.1 L725.5 515.3 L723.0 613.4 L493.7 617.9ZM494.0 703.3 L721.8 709.6 L719.4 802.2 L495.3 785.7ZM495.0 703.7 L720.6 710.0 L718.3 801.7 L496.2 785.4ZM724.2 613.8 L1024.2 608.0 L1015.6 717.9 L721.8 709.6ZM725.4 614.3 L1022.6 608.6 L1014.1 717.3 L723.0 709.2ZM719.4 802.2 L1007.4 823.5 L999.4 925.2 L717.1 891.8ZM720.6 802.7 L1005.8 823.9 L997.9 924.6 L718.3 891.6ZM1033.2 493.8 L1448.6 465.5 L1428.5 600.3 L1024.2 608.0ZM1034.8 494.3 L1446.2 466.3 L1426.3 599.7 L1025.9 607.5ZM1015.6 717.9 L1409.2 728.9 L1390.9 851.8 L1007.4 823.5ZM1017.2 718.4 L1407.0 729.4 L1388.9 851.1 L1008.9 823.1Z" fill="#06061c" fill-opacity="0.075" fill-rule="evenodd"/>
<path d="M305.0 543.4 L491.4 530.7 L425.8 495.5 L201.3 516.0ZM305.9 543.0 L488.5 530.6 L423.8 496.3 L204.9 516.2ZM28.4 470.2 L307.3 431.9 L28.8 282.5 L-317.1 378.7ZM28.4 469.2 L301.6 431.5 L28.8 286.8 L-308.3 379.5ZM425.8 495.5 L729.1 467.9 L733.8 373.4 L307.3 431.9ZM427.8 494.7 L725.1 467.6 L727.7 375.9 L313.0 432.4ZM726.8 514.7 L1033.2 493.8 L1161.5 428.5 L729.1 467.9ZM729.8 514.1 L1030.2 493.6 L1153.5 430.1 L733.1 468.2ZM733.8 373.4 L1467.7 272.7 L3158.1 -587.6 L748.3 82.5ZM740.1 370.9 L1462.2 271.3 L3040.7 -541.1 L760.5 85.7ZM225.7 889.6 L437.1 922.3 L334.6 1019.8 L74.9 961.6ZM226.5 890.5 L433.5 922.7 L332.6 1017.5 L79.6 961.1ZM496.5 865.7 L717.1 891.8 L716.3 965.5 L437.1 922.3ZM498.2 866.5 L714.3 892.1 L712.6 963.8 L440.6 921.9ZM334.6 1019.8 L714.7 1104.9 L710.5 1469.4 L115.4 1228.2ZM336.5 1022.1 L709.3 1106.0 L701.1 1458.2 L124.0 1226.4ZM716.3 965.5 L1102.2 1025.2 L1324.5 1241.5 L714.7 1104.9ZM720.0 967.1 L1098.5 1025.9 L1311.7 1235.7 L720.0 1103.8ZM999.4 925.2 L1373.3 969.4 L1670.4 1113.1 L1102.2 1025.2ZM1003.9 926.5 L1370.7 969.9 L1657.6 1109.5 L1105.8 1024.4ZM308.7 621.9 L207.7 614.1 L213.9 709.0 L312.3 698.2ZM307.8 622.7 L209.2 615.3 L215.2 707.8 L311.4 697.4ZM315.9 772.5 L219.9 800.8 L225.7 889.6 L319.3 844.8ZM315.0 773.5 L221.3 801.4 L226.9 887.9 L318.4 844.4ZM201.3 516.0 L28.4 470.2 L40.9 601.4 L207.7 614.1ZM199.9 516.7 L31.2 472.4 L43.2 600.1 L206.2 612.9ZM213.9 709.0 L52.7 726.8 L64.1 846.7 L219.9 800.8ZM212.6 710.2 L55.3 727.9 L66.3 844.7 L218.5 800.1ZM64.1 846.7 L-232.8 934.3 L-208.2 1097.0 L74.9 961.6ZM61.9 848.7 L-227.7 934.7 L-203.8 1093.0 L72.6 961.4ZM305.0 543.4 L491.4 530.7 L492.7 618.3 L308.7 621.9ZM306.9 544.2 L489.1 531.9 L490.4 617.4 L310.5 620.9ZM312.3 698.2 L494.0 703.3 L495.3 785.7 L315.9 772.5ZM314.2 699.1 L491.8 704.1 L493.0 784.6 L317.7 771.8ZM492.7 618.3 L724.2 613.8 L721.8 709.6 L494.0 703.3ZM495.1 619.2 L721.3 615.0 L718.9 708.5 L496.3 702.4ZM495.3 785.7 L719.4 802.2 L717.1 891.8 L496.5 865.7ZM497.6 786.8 L716.5 803.1 L714.3 890.5 L498.7 865.1ZM726.8 514.7 L1033.2 493.8 L1024.2 608.0 L724.2 613.8ZM729.8 515.6 L1029.1 495.4 L1020.4 606.9 L727.2 612.7ZM721.8 709.6 L1015.6 717.9 L1007.4 823.5 L719.4 802.2ZM724.7 710.8 L1011.7 719.0 L1003.7 822.0 L722.3 801.4ZM1024.2 608.0 L1428.5 600.3 L1409.2 728.9 L1015.6 717.9ZM1028.1 609.2 L1422.9 601.8 L1404.2 727.3 L1019.6 716.7ZM1007.4 823.5 L1390.9 851.8 L1373.3 969.4 L999.4 925.2ZM1011.0 824.9 L1385.6 852.8 L1368.6 967.5 L1003.1 924.5Z" fill="#0a0a16" fill-opacity="0.095" fill-rule="evenodd"/>
<path d="M201.3 516.0 L425.8 495.5 L307.3 431.9 L28.4 470.2ZM201.8 515.6 L423.2 495.4 L306.0 433.0 L31.9 470.4ZM491.4 530.7 L726.8 514.7 L729.1 467.9 L425.8 495.5ZM492.6 530.4 L724.8 514.6 L726.4 468.6 L428.4 495.7ZM307.3 431.9 L733.8 373.4 L748.3 82.5 L28.8 282.5ZM308.6 430.9 L729.8 372.9 L739.8 89.2 L35.8 283.4ZM729.1 467.9 L1161.5 428.5 L1467.7 272.7 L733.8 373.4ZM731.8 467.2 L1158.9 428.2 L1456.3 275.7 L737.8 373.9ZM1033.2 493.8 L1448.6 465.5 L1827.6 367.9 L1161.5 428.5ZM1036.6 493.3 L1446.8 465.3 L1816.9 369.6 L1164.1 428.9ZM319.3 844.8 L496.5 865.7 L437.1 922.3 L225.7 889.6ZM320.0 845.2 L494.7 865.9 L435.8 921.4 L228.0 889.4ZM74.9 961.6 L334.6 1019.8 L115.4 1228.2 L-208.2 1097.0ZM75.1 962.7 L331.2 1020.3 L114.9 1224.4 L-203.2 1096.3ZM437.1 922.3 L716.3 965.5 L714.7 1104.9 L334.6 1019.8ZM438.3 923.1 L713.8 965.8 L711.2 1102.6 L337.9 1019.3ZM717.1 891.8 L999.4 925.2 L1102.2 1025.2 L716.3 965.5ZM719.0 892.5 L997.5 925.5 L1097.7 1023.6 L718.7 965.1ZM305.0 543.4 L201.3 516.0 L207.7 614.1 L308.7 621.9ZM304.4 543.9 L202.3 517.0 L208.6 613.5 L308.1 621.2ZM312.3 698.2 L213.9 709.0 L219.9 800.8 L315.9 772.5ZM311.8 698.8 L214.9 709.6 L220.7 799.8 L315.3 772.1ZM207.7 614.1 L40.9 601.4 L52.7 726.8 L213.9 709.0ZM206.8 614.8 L42.6 602.5 L54.2 725.6 L212.9 708.4ZM219.9 800.8 L64.1 846.7 L74.9 961.6 L225.7 889.6ZM219.0 801.7 L65.7 847.2 L76.3 960.1 L224.8 889.3ZM308.7 621.9 L492.7 618.3 L494.0 703.3 L312.3 698.2ZM310.0 622.4 L491.2 619.0 L492.5 702.6 L313.5 697.6ZM315.9 772.5 L495.3 785.7 L496.5 865.7 L319.3 844.8ZM317.1 773.1 L493.8 786.2 L495.0 865.0 L320.5 844.4ZM491.4 530.7 L726.8 514.7 L724.2 613.8 L492.7 618.3ZM493.0 531.3 L724.8 515.6 L722.3 613.1 L494.3 617.6ZM494.0 703.3 L721.8 709.6 L719.4 802.2 L495.3 785.7ZM495.6 703.9 L719.8 710.3 L717.5 801.4 L496.8 785.2ZM724.2 613.8 L1024.2 608.0 L1015.6 717.9 L721.8 709.6ZM726.2 614.5 L1021.6 608.9 L1013.2 717.0 L723.7 709.0ZM719.4 802.2 L1007.4 823.5 L999.4 925.2 L717.1 891.8ZM721.3 803.1 L1004.8 824.1 L997.0 924.2 L719.0 891.4ZM1033.2 493.8 L1448.6 465.5 L1428.5 600.3 L1024.2 608.0ZM1035.8 494.5 L1444.7 466.8 L1425.0 599.3 L1026.9 607.2ZM1015.6 717.9 L1409.2 728.9 L1390.9 851.8 L1007.4 823.5ZM1018.1 718.7 L1405.6 729.7 L1387.6 850.6 L1009.9 822.9Z" fill="#06061c" fill-opacity="0.075" fill-rule="evenodd"/>
<path d="M305.0 543.4 L491.4 530.7 L425.8 495.5 L201.3 516.0ZM306.4 542.9 L487.1 530.5 L422.9 496.7 L206.6 516.2ZM28.4 470.2 L307.3 431.9 L28.8 282.5 L-317.1 378.7ZM28.5 468.7 L298.9 431.2 L28.8 288.7 L-304.3 379.8ZM425.8 495.5 L729.1 467.9 L733.8 373.4 L307.3 431.9ZM428.7 494.4 L723.2 467.4 L724.9 377.0 L315.6 432.7ZM726.8 514.7 L1033.2 493.8 L1161.5 428.5 L729.1 467.9ZM731.2 513.8 L1028.9 493.5 L1149.9 430.8 L734.9 468.4ZM733.8 373.4 L1467.7 272.7 L3158.1 -587.6 L748.3 82.5ZM743.0 369.8 L1459.7 270.6 L2989.5 -520.8 L766.0 87.2ZM225.7 889.6 L437.1 922.3 L334.6 1019.8 L74.9 961.6ZM226.9 891.0 L431.8 922.8 L331.8 1016.5 L81.8 960.9ZM496.5 865.7 L717.1 891.8 L716.3 965.5 L437.1 922.3ZM499.0 866.9 L713.0 892.3 L711.0 963.1 L442.3 921.7ZM334.6 1019.8 L714.7 1104.9 L710.5 1469.4 L115.4 1228.2ZM337.4 1023.1 L706.8 1106.5 L696.9 1453.2 L128.0 1225.6ZM716.3 965.5 L1102.2 1025.2 L1324.5 1241.5 L714.7 1104.9ZM721.7 967.9 L1096.9 1026.3 L1305.8 1233.0 L722.4 1103.3ZM999.4 925.2 L1373.3 969.4 L1670.4 1113.1 L1102.2 1025.2ZM1006.0 927.0 L1369.5 970.2 L1651.8 1107.9 L1107.4 1024.1ZM308.7 621.9 L207.7 614.1 L213.9 709.0 L312.3 698.2ZM307.4 623.0 L209.9 615.9 L215.8 707.2 L311.0 697.1ZM315.9 772.5 L219.9 800.8 L225.7 889.6 L319.3 844.8ZM314.6 774.1 L221.9 801.7 L227.5 887.2 L318.0 844.2ZM201.3 516.0 L28.4 470.2 L40.9 601.4 L207.7 614.1ZM199.2 517.1 L32.5 473.4 L44.3 599.5 L205.5 612.4ZM213.9 709.0 L52.7 726.8 L64.1 846.7 L219.9 800.8ZM212.0 710.8 L56.4 728.4 L67.3 843.8 L217.8 799.8ZM64.1 846.7 L-232.8 934.3 L-208.2 1097.0 L74.9 961.6ZM60.9 849.7 L-225.3 935.0 L-201.9 1091.2 L71.5 961.3ZM305.0 543.4 L491.4 530.7 L492.7 618.3 L308.7 621.9ZM307.8 544.6 L488.0 532.4 L489.3 616.9 L311.4 620.5ZM312.3 698.2 L494.0 703.3 L495.3 785.7 L315.9 772.5ZM315.1 699.5 L490.7 704.5 L492.0 784.1 L318.5 771.4ZM492.7 618.3 L724.2 613.8 L721.8 709.6 L494.0 703.3ZM496.2 619.7 L719.9 615.5 L717.6 708.0 L497.4 702.0ZM495.3 785.7 L719.4 802.2 L717.1 891.8 L496.5 865.7ZM498.6 787.3 L715.2 803.4 L713.1 889.9 L499.7 864.8ZM726.8 514.7 L1033.2 493.8 L1024.2 608.0 L724.2 613.8ZM731.2 516.1 L1027.2 496.2 L1018.7 606.3 L728.6 612.1ZM721.8 709.6 L1015.6 717.9 L1007.4 823.5 L719.4 802.2ZM726.0 711.3 L1009.9 719.5 L1002.1 821.4 L723.6 801.0ZM1024.2 608.0 L1428.5 600.3 L1409.2 728.9 L1015.6 717.9ZM1029.8 609.8 L1420.3 602.6 L1401.9 726.6 L1021.4 716.2ZM1007.4 823.5 L1390.9 851.8 L1373.3 969.4 L999.4 925.2ZM1012.7 825.6 L1383.2 853.2 L1366.4 966.7 L1004.9 924.2Z" fill="#0a0a16" fill-opacity="0.095" fill-rule="evenodd"/>
<path d="M201.3 516.0 L425.8 495.5 L307.3 431.9 L28.4 470.2ZM202.0 515.4 L422.0 495.3 L305.4 433.4 L33.5 470.5ZM491.4 530.7 L726.8 514.7 L729.1 467.9 L425.8 495.5ZM493.2 530.3 L723.9 514.5 L725.2 469.0 L429.6 495.8ZM307.3 431.9 L733.8 373.4 L748.3 82.5 L28.8 282.5ZM309.2 430.4 L727.9 372.7 L736.0 92.3 L39.1 283.9ZM729.1 467.9 L1161.5 428.5 L1467.7 272.7 L733.8 373.4ZM733.1 466.9 L1157.7 428.0 L1451.1 277.1 L739.7 374.2ZM1033.2 493.8 L1448.6 465.5 L1827.6 367.9 L1161.5 428.5ZM1038.1 493.1 L1445.9 465.2 L1812.0 370.4 L1165.3 429.0ZM319.3 844.8 L496.5 865.7 L437.1 922.3 L225.7 889.6ZM320.3 845.4 L493.8 866.0 L435.3 921.1 L229.0 889.3ZM74.9 961.6 L334.6 1019.8 L115.4 1228.2 L-208.2 1097.0ZM75.2 963.2 L329.6 1020.5 L114.6 1222.7 L-200.9 1095.9ZM437.1 922.3 L716.3 965.5 L714.7 1104.9 L334.6 1019.8ZM438.9 923.5 L712.7 966.0 L709.6 1101.5 L339.5 1019.1ZM717.1 891.8 L999.4 925.2 L1102.2 1025.2 L716.3 965.5ZM719.9 892.8 L996.7 925.6 L1095.6 1022.9 L719.9 965.0ZM305.0 543.4 L201.3 516.0 L207.7 614.1 L308.7 621.9ZM304.1 544.1 L202.8 517.4 L209.0 613.2 L307.8 620.9ZM312.3 698.2 L213.9 709.0 L219.9 800.8 L315.9 772.5ZM311.5 699.1 L215.3 709.9 L221.1 799.4 L315.0 771.9ZM207.7 614.1 L40.9 601.4 L52.7 726.8 L213.9 709.0ZM206.4 615.1 L43.4 603.0 L54.9 725.1 L212.5 708.1ZM219.9 800.8 L64.1 846.7 L74.9 961.6 L225.7 889.6ZM218.6 802.2 L66.4 847.3 L77.0 959.4 L224.4 889.2ZM308.7 621.9 L492.7 618.3 L494.0 703.3 L312.3 698.2ZM310.6 622.7 L490.5 619.3 L491.8 702.3 L314.1 697.4ZM315.9 772.5 L495.3 785.7 L496.5 865.7 L319.3 844.8ZM317.7 773.4 L493.1 786.4 L494.3 864.6 L321.1 844.2ZM491.4 530.7 L726.8 514.7 L724.2 613.8 L492.7 618.3ZM493.7 531.6 L723.8 516.0 L721.4 612.8 L495.0 617.3ZM494.0 703.3 L721.8 709.6 L719.4 802.2 L495.3 785.7ZM496.3 704.2 L718.9 710.6 L716.7 801.0 L497.5 785.0ZM724.2 613.8 L1024.2 608.0 L1015.6 717.9 L721.8 709.6ZM727.1 614.9 L1020.4 609.4 L1012.0 716.6 L724.7 708.7ZM719.4 802.2 L1007.4 823.5 L999.4 925.2 L717.1 891.8ZM722.2 803.5 L1003.6 824.4 L995.9 923.7 L719.9 891.2ZM1033.2 493.8 L1448.6 465.5 L1428.5 600.3 L1024.2 608.0ZM1037.0 494.9 L1443.0 467.4 L1423.4 598.9 L1028.2 606.7ZM1015.6 717.9 L1409.2 728.9 L1390.9 851.8 L1007.4 823.5ZM1019.3 719.1 L1404.0 730.1 L1386.1 850.1 L1011.1 822.6Z" fill="#06061c" fill-opacity="0.075" fill-rule="evenodd"/>
<path d="M305.0 543.4 L491.4 530.7 L425.8 495.5 L201.3 516.0ZM306.9 542.7 L485.5 530.4 L421.9 497.1 L208.6 516.3ZM28.4 470.2 L307.3 431.9 L28.8 282.5 L-317.1 378.7ZM28.5 468.1 L295.9 431.0 L28.8 290.9 L-299.7 380.2ZM425.8 495.5 L729.1 467.9 L733.8 373.4 L307.3 431.9ZM429.8 494.0 L721.1 467.2 L721.7 378.2 L318.6 432.9ZM726.8 514.7 L1033.2 493.8 L1161.5 428.5 L729.1 467.9ZM732.9 513.5 L1027.3 493.3 L1145.8 431.7 L737.1 468.6ZM733.8 373.4 L1467.7 272.7 L3158.1 -587.6 L748.3 82.5ZM746.4 368.4 L1456.7 269.8 L2932.7 -498.3 L772.4 88.8ZM225.7 889.6 L437.1 922.3 L334.6 1019.8 L74.9 961.6ZM227.3 891.5 L429.9 923.0 L330.8 1015.3 L84.3 960.6ZM496.5 865.7 L717.1 891.8 L716.3 965.5 L437.1 922.3ZM499.9 867.3 L711.5 892.4 L709.1 962.2 L444.2 921.5ZM334.6 1019.8 L714.7 1104.9 L710.5 1469.4 L115.4 1228.2ZM338.4 1024.4 L704.0 1107.1 L692.1 1447.4 L132.6 1224.7ZM716.3 965.5 L1102.2 1025.2 L1324.5 1241.5 L714.7 1104.9ZM723.6 968.8 L1094.9 1026.7 L1299.2 1230.0 L725.2 1102.7ZM999.4 925.2 L1373.3 969.4 L1670.4 1113.1 L1102.2 1025.2ZM1008.4 927.7 L1368.1 970.5 L1645.1 1106.0 L1109.3 1023.7ZM308.7 621.9 L207.7 614.1 L213.9 709.0 L312.3 698.2ZM306.9 623.5 L210.6 616.5 L216.5 706.6 L310.5 696.7ZM315.9 772.5 L219.9 800.8 L225.7 889.6 L319.3 844.8ZM314.2 774.6 L222.7 802.0 L228.2 886.3 L317.5 844.0ZM201.3 516.0 L28.4 470.2 L40.9 601.4 L207.7 614.1ZM198.5 517.5 L33.9 474.6 L45.5 598.9 L204.7 611.7ZM213.9 709.0 L52.7 726.8 L64.1 846.7 L219.9 800.8ZM211.2 711.4 L57.7 729.0 L68.4 842.7 L217.1 799.5ZM64.1 846.7 L-232.8 934.3 L-208.2 1097.0 L74.9 961.6ZM59.7 850.8 L-222.6 935.2 L-199.6 1089.1 L70.2 961.2ZM305.0 543.4 L491.4 530.7 L492.7 618.3 L308.7 621.9ZM308.8 545.0 L486.8 533.1 L488.1 616.4 L312.4 620.0ZM312.3 698.2 L494.0 703.3 L495.3 785.7 L315.9 772.5ZM316.1 700.0 L489.5 705.0 L490.8 783.5 L319.5 771.1ZM492.7 618.3 L724.2 613.8 L721.8 709.6 L494.0 703.3ZM497.4 620.2 L718.3 616.1 L716.1 707.3 L498.6 701.5ZM495.3 785.7 L719.4 802.2 L717.1 891.8 L496.5 865.7ZM499.8 787.9 L713.7 803.9 L711.6 889.2 L500.9 864.5ZM726.8 514.7 L1033.2 493.8 L1024.2 608.0 L724.2 613.8ZM732.8 516.6 L1025.1 497.0 L1016.7 605.7 L730.2 611.5ZM721.8 709.6 L1015.6 717.9 L1007.4 823.5 L719.4 802.2ZM727.5 711.9 L1007.9 720.1 L1000.1 820.6 L725.2 800.6ZM1024.2 608.0 L1428.5 600.3 L1409.2 728.9 L1015.6 717.9ZM1031.8 610.4 L1417.3 603.4 L1399.3 725.7 L1023.5 715.6ZM1007.4 823.5 L1390.9 851.8 L1373.3 969.4 L999.4 925.2ZM1014.6 826.4 L1380.4 853.8 L1363.9 965.7 L1006.9 923.8Z" fill="#0a0a16" fill-opacity="0.095" fill-rule="evenodd"/>
<path d="M201.3 516.0 L425.8 495.5 L307.3 431.9 L28.4 470.2ZM202.3 515.2 L420.6 495.2 L304.7 434.0 L35.4 470.6ZM491.4 530.7 L726.8 514.7 L729.1 467.9 L425.8 495.5ZM493.8 530.1 L722.8 514.4 L723.7 469.3 L430.9 495.9ZM307.3 431.9 L733.8 373.4 L748.3 82.5 L28.8 282.5ZM309.9 429.9 L725.8 372.4 L731.6 95.7 L42.8 284.3ZM729.1 467.9 L1161.5 428.5 L1467.7 272.7 L733.8 373.4ZM734.6 466.5 L1156.3 427.9 L1445.2 278.7 L741.8 374.4ZM1033.2 493.8 L1448.6 465.5 L1827.6 367.9 L1161.5 428.5ZM1039.9 492.8 L1444.9 465.1 L1806.4 371.3 L1166.6 429.2ZM319.3 844.8 L496.5 865.7 L437.1 922.3 L225.7 889.6ZM320.6 845.6 L492.8 866.1 L434.6 920.6 L230.2 889.2ZM74.9 961.6 L334.6 1019.8 L115.4 1228.2 L-208.2 1097.0ZM75.3 963.8 L327.8 1020.7 L114.3 1220.8 L-198.3 1095.6ZM437.1 922.3 L716.3 965.5 L714.7 1104.9 L334.6 1019.8ZM439.6 923.9 L711.4 966.2 L707.7 1100.3 L341.3 1018.8ZM717.1 891.8 L999.4 925.2 L1102.2 1025.2 L716.3 965.5ZM720.9 893.1 L995.7 925.7 L1093.2 1022.1 L721.2 964.8ZM305.0 543.4 L201.3 516.0 L207.7 614.1 L308.7 621.9ZM303.8 544.3 L203.3 518.0 L209.5 612.8 L307.4 620.6ZM312.3 698.2 L213.9 709.0 L219.9 800.8 L315.9 772.5ZM311.2 699.4 L215.8 710.2 L221.6 798.9 L314.7 771.7ZM207.7 614.1 L40.9 601.4 L52.7 726.8 L213.9 709.0ZM205.9 615.4 L44.4 603.5 L55.7 724.6 L211.9 707.8ZM219.9 800.8 L64.1 846.7 L74.9 961.6 L225.7 889.6ZM218.2 802.7 L67.3 847.6 L77.7 958.5 L223.9 889.1ZM308.7 621.9 L492.7 618.3 L494.0 703.3 L312.3 698.2ZM311.2 623.0 L489.7 619.7 L491.0 701.9 L314.7 697.1ZM315.9 772.5 L495.3 785.7 L496.5 865.7 L319.3 844.8ZM318.4 773.7 L492.3 786.7 L493.5 864.2 L321.7 844.0ZM491.4 530.7 L726.8 514.7 L724.2 613.8 L492.7 618.3ZM494.6 531.9 L722.7 516.5 L720.3 612.4 L495.8 616.9ZM494.0 703.3 L721.8 709.6 L719.4 802.2 L495.3 785.7ZM497.1 704.6 L717.9 710.9 L715.7 800.6 L498.3 784.7ZM724.2 613.8 L1024.2 608.0 L1015.6 717.9 L721.8 709.6ZM728.1 615.2 L1018.9 609.8 L1010.7 716.1 L725.7 708.3ZM719.4 802.2 L1007.4 823.5 L999.4 925.2 L717.1 891.8ZM723.2 803.9 L1002.3 824.7 L994.7 923.1 L720.9 890.9ZM1033.2 493.8 L1448.6 465.5 L1428.5 600.3 L1024.2 608.0ZM1038.4 495.2 L1440.9 468.1 L1421.6 598.4 L1029.6 606.3ZM1015.6 717.9 L1409.2 728.9 L1390.9 851.8 L1007.4 823.5ZM1020.6 719.6 L1402.0 730.6 L1384.4 849.5 L1012.4 822.3Z" fill="#06061c" fill-opacity="0.075" fill-rule="evenodd"/>
<path d="M305.0 543.4 L491.4 530.7 L425.8 495.5 L201.3 516.0ZM307.4 542.4 L483.8 530.3 L420.8 497.5 L210.8 516.5ZM28.4 470.2 L307.3 431.9 L28.8 282.5 L-317.1 378.7ZM28.5 467.4 L292.4 430.7 L28.8 293.4 L-294.5 380.6ZM425.8 495.5 L729.1 467.9 L733.8 373.4 L307.3 431.9ZM431.0 493.5 L718.7 467.0 L718.1 379.6 L322.0 433.2ZM726.8 514.7 L1033.2 493.8 L1161.5 428.5 L729.1 467.9ZM734.7 513.1 L1025.5 493.2 L1141.2 432.6 L739.4 468.8ZM733.8 373.4 L1467.7 272.7 L3158.1 -587.6 L748.3 82.5ZM750.2 366.9 L1453.4 269.0 L2871.4 -474.0 L779.5 90.7ZM225.7 889.6 L437.1 922.3 L334.6 1019.8 L74.9 961.6ZM227.8 892.0 L427.8 923.3 L329.7 1013.9 L87.1 960.3ZM496.5 865.7 L717.1 891.8 L716.3 965.5 L437.1 922.3ZM500.9 867.8 L709.8 892.6 L706.9 961.2 L446.3 921.3ZM334.6 1019.8 L714.7 1104.9 L710.5 1469.4 L115.4 1228.2ZM339.6 1025.8 L700.8 1107.8 L686.7 1441.1 L137.6 1223.6ZM716.3 965.5 L1102.2 1025.2 L1324.5 1241.5 L714.7 1104.9ZM725.9 969.8 L1092.8 1027.1 L1291.7 1226.6 L728.4 1102.1ZM999.4 925.2 L1373.3 969.4 L1670.4 1113.1 L1102.2 1025.2ZM1011.2 928.5 L1366.5 970.8 L1637.7 1104.0 L1111.5 1023.3ZM308.7 621.9 L207.7 614.1 L213.9 709.0 L312.3 698.2ZM306.4 624.0 L211.5 617.2 L217.3 705.9 L309.9 696.2ZM315.9 772.5 L219.9 800.8 L225.7 889.6 L319.3 844.8ZM313.7 775.3 L223.5 802.4 L228.9 885.4 L317.0 843.8ZM201.3 516.0 L28.4 470.2 L40.9 601.4 L207.7 614.1ZM197.6 517.9 L35.5 475.9 L46.9 598.1 L203.8 611.0ZM213.9 709.0 L52.7 726.8 L64.1 846.7 L219.9 800.8ZM210.5 712.2 L59.2 729.6 L69.7 841.6 L216.2 799.1ZM64.1 846.7 L-232.8 934.3 L-208.2 1097.0 L74.9 961.6ZM58.3 852.0 L-219.6 935.5 L-197.0 1086.7 L68.8 961.1ZM305.0 543.4 L491.4 530.7 L492.7 618.3 L308.7 621.9ZM310.0 545.4 L485.4 533.7 L486.7 615.9 L313.5 619.5ZM312.3 698.2 L494.0 703.3 L495.3 785.7 L315.9 772.5ZM317.2 700.5 L488.2 705.5 L489.4 782.9 L320.5 770.6ZM492.7 618.3 L724.2 613.8 L721.8 709.6 L494.0 703.3ZM498.8 620.7 L716.5 616.8 L714.3 706.7 L500.0 701.0ZM495.3 785.7 L719.4 802.2 L717.1 891.8 L496.5 865.7ZM501.2 788.5 L712.0 804.4 L709.9 888.4 L502.3 864.1ZM726.8 514.7 L1033.2 493.8 L1024.2 608.0 L724.2 613.8ZM734.5 517.1 L1022.6 497.9 L1014.4 605.0 L732.0 610.8ZM721.8 709.6 L1015.6 717.9 L1007.4 823.5 L719.4 802.2ZM729.3 712.6 L1005.6 720.7 L998.0 819.7 L726.9 800.1ZM1024.2 608.0 L1428.5 600.3 L1409.2 728.9 L1015.6 717.9ZM1034.1 611.2 L1414.0 604.4 L1396.3 724.8 L1025.8 715.0ZM1007.4 823.5 L1390.9 851.8 L1373.3 969.4 L999.4 925.2ZM1016.8 827.3 L1377.3 854.3 L1361.1 964.5 L1009.1 923.4Z" fill="#0a0a16" fill-opacity="0.095" fill-rule="evenodd"/>
<path d="M201.3 516.0 L425.8 495.5 L307.3 431.9 L28.4 470.2ZM202.6 514.9 L419.1 495.1 L304.0 434.6 L37.4 470.8ZM491.4 530.7 L726.8 514.7 L729.1 467.9 L425.8 495.5ZM494.5 529.9 L721.6 514.4 L722.1 469.7 L432.5 495.9ZM307.3 431.9 L733.8 373.4 L748.3 82.5 L28.8 282.5ZM310.7 429.3 L723.3 372.1 L726.7 99.6 L47.0 284.9ZM729.1 467.9 L1161.5 428.5 L1467.7 272.7 L733.8 373.4ZM736.2 466.0 L1154.7 427.7 L1438.6 280.4 L744.2 374.8ZM1033.2 493.8 L1448.6 465.5 L1827.6 367.9 L1161.5 428.5ZM1042.0 492.4 L1443.9 464.9 L1800.1 372.2 L1168.2 429.4ZM319.3 844.8 L496.5 865.7 L437.1 922.3 L225.7 889.6ZM321.0 845.9 L491.7 866.2 L433.9 920.2 L231.6 889.0ZM74.9 961.6 L334.6 1019.8 L115.4 1228.2 L-208.2 1097.0ZM75.4 964.4 L325.8 1021.0 L114.0 1218.6 L-195.4 1095.1ZM437.1 922.3 L716.3 965.5 L714.7 1104.9 L334.6 1019.8ZM440.3 924.4 L709.9 966.4 L705.7 1099.0 L343.3 1018.5ZM717.1 891.8 L999.4 925.2 L1102.2 1025.2 L716.3 965.5ZM722.0 893.5 L994.5 925.9 L1090.6 1021.2 L722.6 964.6ZM305.0 543.4 L201.3 516.0 L207.7 614.1 L308.7 621.9ZM303.4 544.6 L203.9 518.6 L210.0 612.4 L307.0 620.2ZM312.3 698.2 L213.9 709.0 L219.9 800.8 L315.9 772.5ZM310.8 699.8 L216.4 710.6 L222.1 798.3 L314.3 771.5ZM207.7 614.1 L40.9 601.4 L52.7 726.8 L213.9 709.0ZM205.3 615.8 L45.4 604.2 L56.6 723.9 L211.4 707.4ZM219.9 800.8 L64.1 846.7 L74.9 961.6 L225.7 889.6ZM217.7 803.2 L68.3 847.8 L78.6 957.6 L223.3 888.9ZM308.7 621.9 L492.7 618.3 L494.0 703.3 L312.3 698.2ZM312.0 623.3 L488.8 620.1 L490.1 701.5 L315.5 696.8ZM315.9 772.5 L495.3 785.7 L496.5 865.7 L319.3 844.8ZM319.1 774.1 L491.4 787.0 L492.6 863.7 L322.4 843.8ZM491.4 530.7 L726.8 514.7 L724.2 613.8 L492.7 618.3ZM495.5 532.2 L721.5 517.0 L719.2 612.0 L496.7 616.5ZM494.0 703.3 L721.8 709.6 L719.4 802.2 L495.3 785.7ZM498.0 705.0 L716.7 711.3 L714.5 800.1 L499.2 784.4ZM724.2 613.8 L1024.2 608.0 L1015.6 717.9 L721.8 709.6ZM729.3 615.6 L1017.4 610.4 L1009.2 715.6 L726.9 707.9ZM719.4 802.2 L1007.4 823.5 L999.4 925.2 L717.1 891.8ZM724.3 804.4 L1000.8 825.0 L993.3 922.5 L722.0 890.7ZM1033.2 493.8 L1448.6 465.5 L1428.5 600.3 L1024.2 608.0ZM1039.9 495.6 L1438.6 468.9 L1419.6 597.9 L1031.2 605.7ZM1015.6 717.9 L1409.2 728.9 L1390.9 851.8 L1007.4 823.5ZM1022.1 720.1 L1399.9 731.1 L1382.5 848.8 L1014.0 821.9Z" fill="#06061c" fill-opacity="0.075" fill-rule="evenodd"/>
<path d="M305.0 543.4 L491.4 530.7 L425.8 495.5 L201.3 516.0ZM308.1 542.2 L481.8 530.2 L419.5 498.0 L213.2 516.6ZM28.4 470.2 L307.3 431.9 L28.8 282.5 L-317.1 378.7ZM28.5 466.7 L288.6 430.4 L28.8 296.0 L-288.8 381.1ZM425.8 495.5 L729.1 467.9 L733.8 373.4 L307.3 431.9ZM432.3 492.9 L716.0 466.8 L714.2 381.2 L325.7 433.5ZM726.8 514.7 L1033.2 493.8 L1161.5 428.5 L729.1 467.9ZM736.8 512.7 L1023.5 493.0 L1136.1 433.6 L742.1 469.0ZM733.8 373.4 L1467.7 272.7 L3158.1 -587.6 L748.3 82.5ZM754.5 365.2 L1449.8 268.0 L2806.5 -448.3 L787.3 92.8ZM225.7 889.6 L437.1 922.3 L334.6 1019.8 L74.9 961.6ZM228.3 892.7 L425.4 923.5 L328.5 1012.5 L90.2 960.0ZM496.5 865.7 L717.1 891.8 L716.3 965.5 L437.1 922.3ZM502.1 868.3 L707.9 892.8 L704.6 960.2 L448.7 921.0ZM334.6 1019.8 L714.7 1104.9 L710.5 1469.4 L115.4 1228.2ZM340.9 1027.4 L697.2 1108.5 L681.0 1434.2 L143.2 1222.5ZM716.3 965.5 L1102.2 1025.2 L1324.5 1241.5 L714.7 1104.9ZM728.4 971.0 L1090.3 1027.6 L1283.7 1222.9 L731.9 1101.4ZM999.4 925.2 L1373.3 969.4 L1670.4 1113.1 L1102.2 1025.2ZM1014.2 929.4 L1364.8 971.2 L1629.6 1101.7 L1113.8 1022.8ZM308.7 621.9 L207.7 614.1 L213.9 709.0 L312.3 698.2ZM305.8 624.5 L212.5 618.0 L218.1 705.1 L309.3 695.7ZM315.9 772.5 L219.9 800.8 L225.7 889.6 L319.3 844.8ZM313.1 776.0 L224.4 802.8 L229.7 884.3 L316.4 843.5ZM201.3 516.0 L28.4 470.2 L40.9 601.4 L207.7 614.1ZM196.7 518.4 L37.3 477.3 L48.5 597.3 L202.8 610.2ZM213.9 709.0 L52.7 726.8 L64.1 846.7 L219.9 800.8ZM209.6 713.0 L60.9 730.4 L71.1 840.2 L215.3 798.7ZM64.1 846.7 L-232.8 934.3 L-208.2 1097.0 L74.9 961.6ZM56.9 853.3 L-216.3 935.8 L-194.2 1084.2 L67.2 960.9ZM305.0 543.4 L491.4 530.7 L492.7 618.3 L308.7 621.9ZM311.3 545.9 L483.8 534.5 L485.2 615.3 L314.7 618.9ZM312.3 698.2 L494.0 703.3 L495.3 785.7 L315.9 772.5ZM318.5 701.1 L486.7 706.1 L487.9 782.2 L321.7 770.2ZM492.7 618.3 L724.2 613.8 L721.8 709.6 L494.0 703.3ZM500.4 621.3 L714.6 617.6 L712.5 705.9 L501.5 700.4ZM495.3 785.7 L719.4 802.2 L717.1 891.8 L496.5 865.7ZM502.7 789.2 L710.1 804.9 L708.1 887.5 L503.7 863.7ZM726.8 514.7 L1033.2 493.8 L1024.2 608.0 L724.2 613.8ZM736.5 517.8 L1020.0 499.0 L1011.9 604.2 L734.0 610.0ZM721.8 709.6 L1015.6 717.9 L1007.4 823.5 L719.4 802.2ZM731.2 713.4 L1003.0 721.4 L995.6 818.8 L728.8 799.6ZM1024.2 608.0 L1428.5 600.3 L1409.2 728.9 L1015.6 717.9ZM1036.7 611.9 L1410.4 605.4 L1393.1 723.8 L1028.4 714.2ZM1007.4 823.5 L1390.9 851.8 L1373.3 969.4 L999.4 925.2ZM1019.2 828.2 L1373.9 855.0 L1358.0 963.3 L1011.6 922.9Z" fill="#0a0a16" fill-opacity="0.095" fill-rule="evenodd"/>
<path d="M201.3 516.0 L425.8 495.5 L307.3 431.9 L28.4 470.2ZM202.9 514.7 L417.4 495.0 L303.1 435.2 L39.7 470.9ZM491.4 530.7 L726.8 514.7 L729.1 467.9 L425.8 495.5ZM495.3 529.7 L720.3 514.3 L720.4 470.2 L434.2 496.1ZM307.3 431.9 L733.8 373.4 L748.3 82.5 L28.8 282.5ZM311.5 428.6 L720.7 371.7 L721.4 103.8 L51.5 285.5ZM729.1 467.9 L1161.5 428.5 L1467.7 272.7 L733.8 373.4ZM738.1 465.5 L1153.0 427.4 L1431.4 282.3 L746.8 375.1ZM1033.2 493.8 L1448.6 465.5 L1827.6 367.9 L1161.5 428.5ZM1044.2 492.1 L1442.7 464.8 L1793.3 373.3 L1169.9 429.6ZM319.3 844.8 L496.5 865.7 L437.1 922.3 L225.7 889.6ZM321.4 846.2 L490.5 866.3 L433.1 919.6 L233.1 888.9ZM74.9 961.6 L334.6 1019.8 L115.4 1228.2 L-208.2 1097.0ZM75.5 965.2 L323.5 1021.3 L113.6 1216.2 L-192.1 1094.7ZM437.1 922.3 L716.3 965.5 L714.7 1104.9 L334.6 1019.8ZM441.2 925.0 L708.3 966.6 L703.4 1097.5 L345.5 1018.2ZM717.1 891.8 L999.4 925.2 L1102.2 1025.2 L716.3 965.5ZM723.2 893.9 L993.3 926.1 L1087.6 1020.1 L724.2 964.3ZM305.0 543.4 L201.3 516.0 L207.7 614.1 L308.7 621.9ZM303.0 544.8 L204.6 519.2 L210.6 612.0 L306.6 619.8ZM312.3 698.2 L213.9 709.0 L219.9 800.8 L315.9 772.5ZM310.5 700.2 L217.0 711.0 L222.6 797.7 L313.9 771.2ZM207.7 614.1 L40.9 601.4 L52.7 726.8 L213.9 709.0ZM204.7 616.3 L46.5 604.9 L57.6 723.2 L210.7 707.0ZM219.9 800.8 L64.1 846.7 L74.9 961.6 L225.7 889.6ZM217.1 803.9 L69.3 848.1 L79.5 956.6 L222.7 888.8ZM308.7 621.9 L492.7 618.3 L494.0 703.3 L312.3 698.2ZM312.9 623.7 L487.8 620.5 L489.1 701.1 L316.3 696.4ZM315.9 772.5 L495.3 785.7 L496.5 865.7 L319.3 844.8ZM319.9 774.6 L490.4 787.3 L491.7 863.2 L323.2 843.5ZM491.4 530.7 L726.8 514.7 L724.2 613.8 L492.7 618.3ZM496.6 532.6 L720.2 517.6 L717.9 611.6 L497.8 616.1ZM494.0 703.3 L721.8 709.6 L719.4 802.2 L495.3 785.7ZM499.0 705.5 L715.4 711.8 L713.3 799.6 L500.2 784.1ZM724.2 613.8 L1024.2 608.0 L1015.6 717.9 L721.8 709.6ZM730.6 616.1 L1015.6 611.0 L1007.6 715.0 L728.2 707.5ZM719.4 802.2 L1007.4 823.5 L999.4 925.2 L717.1 891.8ZM725.6 804.9 L999.1 825.4 L991.7 921.8 L723.3 890.4ZM1033.2 493.8 L1448.6 465.5 L1428.5 600.3 L1024.2 608.0ZM1041.7 496.1 L1436.1 469.7 L1417.3 597.3 L1033.0 605.1ZM1015.6 717.9 L1409.2 728.9 L1390.9 851.8 L1007.4 823.5ZM1023.7 720.7 L1397.5 731.6 L1380.4 848.0 L1015.7 821.5Z" fill="#06061c" fill-opacity="0.075" fill-rule="evenodd"/>
<path d="M305.0 543.4 L491.4 530.7 L425.8 495.5 L201.3 516.0ZM308.8 541.9 L479.7 530.1 L418.1 498.6 L215.8 516.7ZM28.4 470.2 L307.3 431.9 L28.8 282.5 L-317.1 378.7ZM28.5 465.9 L284.4 430.0 L28.8 298.9 L-282.6 381.7ZM425.8 495.5 L729.1 467.9 L733.8 373.4 L307.3 431.9ZM433.8 492.4 L713.1 466.5 L710.0 382.8 L329.7 433.9ZM726.8 514.7 L1033.2 493.8 L1161.5 428.5 L729.1 467.9ZM739.1 512.3 L1021.4 492.8 L1130.6 434.7 L744.9 469.3ZM733.8 373.4 L1467.7 272.7 L3158.1 -587.6 L748.3 82.5ZM759.3 363.3 L1445.7 266.9 L2739.0 -421.5 L795.8 95.0ZM225.7 889.6 L437.1 922.3 L334.6 1019.8 L74.9 961.6ZM228.9 893.4 L422.8 923.8 L327.1 1010.9 L93.5 959.6ZM496.5 865.7 L717.1 891.8 L716.3 965.5 L437.1 922.3ZM503.3 868.8 L705.9 893.0 L702.0 959.0 L451.2 920.7ZM334.6 1019.8 L714.7 1104.9 L710.5 1469.4 L115.4 1228.2ZM342.3 1029.1 L693.3 1109.3 L674.8 1426.7 L149.3 1221.2ZM716.3 965.5 L1102.2 1025.2 L1324.5 1241.5 L714.7 1104.9ZM731.1 972.2 L1087.7 1028.2 L1274.9 1219.0 L735.6 1100.6ZM999.4 925.2 L1373.3 969.4 L1670.4 1113.1 L1102.2 1025.2ZM1017.6 930.3 L1362.9 971.6 L1620.9 1099.2 L1116.4 1022.3ZM308.7 621.9 L207.7 614.1 L213.9 709.0 L312.3 698.2ZM305.2 625.1 L213.6 618.8 L219.1 704.3 L308.6 695.1ZM315.9 772.5 L219.9 800.8 L225.7 889.6 L319.3 844.8ZM312.5 776.8 L225.4 803.2 L230.6 883.2 L315.7 843.2ZM201.3 516.0 L28.4 470.2 L40.9 601.4 L207.7 614.1ZM195.7 518.9 L39.2 478.9 L50.1 596.4 L201.7 609.3ZM213.9 709.0 L52.7 726.8 L64.1 846.7 L219.9 800.8ZM208.6 713.9 L62.7 731.1 L72.7 838.8 L214.2 798.3ZM64.1 846.7 L-232.8 934.3 L-208.2 1097.0 L74.9 961.6ZM55.3 854.8 L-212.7 936.1 L-191.2 1081.4 L65.5 960.8ZM305.0 543.4 L491.4 530.7 L492.7 618.3 L308.7 621.9ZM312.7 546.5 L482.2 535.3 L483.5 614.6 L316.0 618.2ZM312.3 698.2 L494.0 703.3 L495.3 785.7 L315.9 772.5ZM319.9 701.8 L485.0 706.7 L486.3 781.4 L323.0 769.7ZM492.7 618.3 L724.2 613.8 L721.8 709.6 L494.0 703.3ZM502.1 622.0 L712.4 618.4 L710.4 705.1 L503.1 699.7ZM495.3 785.7 L719.4 802.2 L717.1 891.8 L496.5 865.7ZM504.4 790.0 L708.0 805.5 L706.1 886.6 L505.3 863.2ZM726.8 514.7 L1033.2 493.8 L1024.2 608.0 L724.2 613.8ZM738.7 518.4 L1017.0 500.1 L1009.2 603.3 L736.2 609.2ZM721.8 709.6 L1015.6 717.9 L1007.4 823.5 L719.4 802.2ZM733.3 714.2 L1000.2 722.2 L993.0 817.8 L730.9 799.0ZM1024.2 608.0 L1428.5 600.3 L1409.2 728.9 L1015.6 717.9ZM1039.4 612.8 L1406.4 606.5 L1389.5 722.7 L1031.3 713.4ZM1007.4 823.5 L1390.9 851.8 L1373.3 969.4 L999.4 925.2ZM1021.9 829.3 L1370.1 855.7 L1354.6 962.0 L1014.3 922.4Z" fill="#0a0a16" fill-opacity="0.095" fill-rule="evenodd"/>
<path d="M201.3 516.0 L425.8 495.5 L307.3 431.9 L28.4 470.2ZM203.2 514.4 L415.5 494.9 L302.2 435.9 L42.2 471.1ZM491.4 530.7 L726.8 514.7 L729.1 467.9 L425.8 495.5ZM496.2 529.5 L718.8 514.2 L718.5 470.7 L436.0 496.2ZM307.3 431.9 L733.8 373.4 L748.3 82.5 L28.8 282.5ZM312.5 427.8 L717.7 371.3 L715.7 108.3 L56.5 286.1ZM729.1 467.9 L1161.5 428.5 L1467.7 272.7 L733.8 373.4ZM740.1 465.0 L1151.1 427.2 L1423.6 284.4 L749.7 375.5ZM1033.2 493.8 L1448.6 465.5 L1827.6 367.9 L1161.5 428.5ZM1046.7 491.7 L1441.3 464.6 L1785.9 374.5 L1171.7 429.9ZM319.3 844.8 L496.5 865.7 L437.1 922.3 L225.7 889.6ZM321.9 846.5 L489.2 866.4 L432.2 919.0 L234.7 888.8ZM74.9 961.6 L334.6 1019.8 L115.4 1228.2 L-208.2 1097.0ZM75.6 966.0 L321.0 1021.7 L113.2 1213.6 L-188.6 1094.2ZM437.1 922.3 L716.3 965.5 L714.7 1104.9 L334.6 1019.8ZM442.1 925.6 L706.5 966.9 L701.0 1095.9 L347.9 1017.9ZM717.1 891.8 L999.4 925.2 L1102.2 1025.2 L716.3 965.5ZM724.6 894.4 L992.0 926.3 L1084.5 1019.1 L726.0 964.1ZM305.0 543.4 L201.3 516.0 L207.7 614.1 L308.7 621.9ZM302.6 545.2 L205.3 520.0 L211.2 611.5 L306.1 619.3ZM312.3 698.2 L213.9 709.0 L219.9 800.8 L315.9 772.5ZM310.1 700.7 L217.7 711.4 L223.3 797.0 L313.4 770.9ZM207.7 614.1 L40.9 601.4 L52.7 726.8 L213.9 709.0ZM204.1 616.8 L47.8 605.7 L58.7 722.4 L210.0 706.6ZM219.9 800.8 L64.1 846.7 L74.9 961.6 L225.7 889.6ZM216.5 804.5 L70.5 848.4 L80.5 955.5 L222.0 888.6ZM308.7 621.9 L492.7 618.3 L494.0 703.3 L312.3 698.2ZM313.8 624.1 L486.7 621.0 L488.0 700.6 L317.1 696.0ZM315.9 772.5 L495.3 785.7 L496.5 865.7 L319.3 844.8ZM320.8 775.0 L489.4 787.7 L490.6 862.7 L324.0 843.2ZM491.4 530.7 L726.8 514.7 L724.2 613.8 L492.7 618.3ZM497.7 533.0 L718.8 518.3 L716.5 611.1 L498.9 615.6ZM494.0 703.3 L721.8 709.6 L719.4 802.2 L495.3 785.7ZM500.2 705.9 L714.1 712.2 L711.9 799.0 L501.3 783.7ZM724.2 613.8 L1024.2 608.0 L1015.6 717.9 L721.8 709.6ZM732.0 616.6 L1013.7 611.6 L1005.8 714.4 L729.6 707.0ZM719.4 802.2 L1007.4 823.5 L999.4 925.2 L717.1 891.8ZM726.9 805.5 L997.3 825.9 L990.0 921.1 L724.7 890.1ZM1033.2 493.8 L1448.6 465.5 L1428.5 600.3 L1024.2 608.0ZM1043.5 496.6 L1433.4 470.6 L1414.9 596.6 L1034.9 604.5ZM1015.6 717.9 L1409.2 728.9 L1390.9 851.8 L1007.4 823.5ZM1025.5 721.4 L1394.9 732.2 L1378.1 847.2 L1017.5 821.1Z" fill="#06061c" fill-opacity="0.075" fill-rule="evenodd"/>
</g>
<line x1="305.0" y1="543.4" x2="4593.5" y2="251.4" stroke="#5c1020" stroke-width="1"/>
<line x1="305.0" y1="543.4" x2="-6195.5" y2="-1177.9" stroke="#5c1020" stroke-width="1"/>
<line x1="305.0" y1="543.4" x2="319.3" y2="844.8" stroke="#5c1020" stroke-width="1"/>
<line x1="319.3" y1="844.8" x2="3916.1" y2="1270.0" stroke="#5c1020" stroke-width="1"/>
<line x1="319.3" y1="844.8" x2="-6325.6" y2="4021.5" stroke="#5c1020" stroke-width="1"/>
<rect x="1082" y="377" width="1" height="645" fill="#1c1c34" opacity=".7"/><rect x="76" y="1021" width="1007" height="1" fill="#1c1c34" opacity=".7"/><rect x="76" y="377" width="1" height="645" fill="#3a3a10" opacity=".6"/><rect x="76" y="377" width="1007" height="1" fill="#3a3a10" opacity=".6"/>
<path d="M562.5 794V817M551 805H575" stroke="#6c6c70" stroke-width="1.1" fill="none"/>
<text x="111.6" y="997" font-family="Liberation Sans,sans-serif" font-size="11.5" fill="#e0203c">X</text><path d="M106 992.6H108.6" stroke="#e0203c" stroke-width="1"/>
<path d="M102.6 970V995" stroke="#0c0cc4" stroke-width="1.5"/><path d="M102.6 994.5H126.8" stroke="#2cc050" stroke-width="1.4"/>
<text x="105.8" y="974.6" font-family="Liberation Sans,sans-serif" font-size="11.5" fill="#1010c4">Z</text>
<text x="129.6" y="998.8" font-family="Liberation Sans,sans-serif" font-size="11.5" fill="#2cc050">Y</text>
</g>
<path d="M2.6 4H13.6Q14.4 4 14.4 5V14.6L8.2 18L2 14.6V5Q2 4 2.6 4Z" fill="#0c0808"/><text x="8.2" y="12.6" font-family="Liberation Sans,sans-serif" font-size="7.4" font-weight="bold" text-anchor="middle" fill="#f4f4f4" transform="translate(8.2,0) scale(.78,1.3) translate(-8.2,-2.6)">UDK</text><path d="M5 15.4H11.4" stroke="#6a5050" stroke-width=".7"/><path d="M1574.5 1.5V14Q1574.5 17.5 1578 17.5H1673.5Q1677 17.5 1677 14V1.5Z" fill="url(#gWb)" stroke="#43546a" stroke-width="1"/><path d="M1629.5 2V17H1673.5Q1676.5 17 1676.5 14V2Z" fill="url(#gClose)"/><path d="M1602.5 2V17M1629 2V17" stroke="#43546a" stroke-width="1"/><path d="M1603.5 2V17M1575.5 2V14" stroke="#f4f8fc" stroke-width="1" opacity=".7"/><path d="M1574.5 1.5V14Q1574.5 17.5 1578 17.5H1673.5Q1677 17.5 1677 14V1.5" fill="none" stroke="#43546a" stroke-width="1"/><rect x="1583.5" y="8.5" width="11" height="3.6" rx=".8" fill="#fff" stroke="#54606e" stroke-width=".9"/><rect x="1612" y="2.6" width="9" height="8" fill="none" stroke="#54606e" stroke-width="2.6"/><rect x="1612" y="2.6" width="9" height="8" fill="none" stroke="#fff" stroke-width="1.1"/><rect x="1609.6" y="5" width="9" height="8" fill="#c4d2e2" stroke="#54606e" stroke-width="3"/><rect x="1609.6" y="5" width="9" height="8" fill="none" stroke="#fff" stroke-width="1.5"/><rect x="1612.2" y="7.6" width="3.8" height="3" fill="#8a9aae" stroke="#54606e" stroke-width=".8"/><path d="M1650.2 5.6L1657.2 11.2M1657.2 5.6L1650.2 11.2" stroke="#5a3a3a" stroke-width="4.8" stroke-linecap="square"/><path d="M1650.2 5.6L1657.2 11.2M1657.2 5.6L1650.2 11.2" stroke="#fff" stroke-width="3" stroke-linecap="square"/><path d="M110.5 47V63.5" stroke="#7d7f8a" stroke-width="1"/><path d="M164.5 47V63.5" stroke="#7d7f8a" stroke-width="1"/><path d="M287.5 47V63.5" stroke="#7d7f8a" stroke-width="1"/><path d="M355.5 47V63.5" stroke="#7d7f8a" stroke-width="1"/><path d="M386.5 47V63.5" stroke="#7d7f8a" stroke-width="1"/><path d="M417.5 47V63.5" stroke="#7d7f8a" stroke-width="1"/><path d="M472.5 47V63.5" stroke="#7d7f8a" stroke-width="1"/><path d="M560.5 47V63.5" stroke="#7d7f8a" stroke-width="1"/><path d="M683.5 47V63.5" stroke="#7d7f8a" stroke-width="1"/><path d="M829.5 47V63.5" stroke="#7d7f8a" stroke-width="1"/><path d="M860.5 47V63.5" stroke="#7d7f8a" stroke-width="1"/><path d="M5.5 49.5H12.3L15.3 52.5V61.5H5.5Z" fill="#fff" stroke="#222" stroke-width="1"/><path d="M12.3 49.5V52.5H15.3" fill="#ddd" stroke="#222" stroke-width=".8"/><g transform="translate(0,-.8)"><path d="M26.5 62V52.5H31L32.5 54H37.5V56" fill="#f8f080" stroke="#8a8a30" stroke-width=".9"/><path d="M26.5 62L30 56.5H42L38 62Z" fill="#a8a850" stroke="#70702a" stroke-width=".9"/><path d="M35 51.5C37 49 40 49.5 41 52M41.3 49.6V52.4H38.6" fill="none" stroke="#222" stroke-width=".9"/></g><rect x="47.5" y="46.5" width="12.8" height="18" rx="2.5" fill="#e2e2e4" stroke="#7c7c80"/><rect x="48.5" y="47.5" width="10.8" height="8" rx="2" fill="#f6f6f8"/><path d="M50.3 53.6H57.5L53.9 57.6Z" fill="#000"/><g transform="translate(66.2,48.4) scale(0.93)"><path d="M0 0H13L14.4 1.4V14.4H0Z" fill="#9c9c52" stroke="#5c5c28" stroke-width=".9"/><rect x="2.6" y="0.6" width="8.6" height="6.4" fill="#f0f0f6"/><rect x="3.2" y="9" width="8.2" height="5.2" fill="#48483a"/><rect x="8.4" y="10" width="2" height="3.6" fill="#e8e8e8"/></g><g transform="translate(89.0,48.4) scale(0.66)"><path d="M0 0H13L14.4 1.4V14.4H0Z" fill="#9c9c52" stroke="#5c5c28" stroke-width=".9"/><rect x="2.6" y="0.6" width="8.6" height="6.4" fill="#f0f0f6"/><rect x="3.2" y="9" width="8.2" height="5.2" fill="#48483a"/><rect x="8.4" y="10" width="2" height="3.6" fill="#e8e8e8"/></g><g transform="translate(91.3,50.3) scale(0.66)"><path d="M0 0H13L14.4 1.4V14.4H0Z" fill="#9c9c52" stroke="#5c5c28" stroke-width=".9"/><rect x="2.6" y="0.6" width="8.6" height="6.4" fill="#f0f0f6"/><rect x="3.2" y="9" width="8.2" height="5.2" fill="#48483a"/><rect x="8.4" y="10" width="2" height="3.6" fill="#e8e8e8"/></g><g transform="translate(93.6,52.2) scale(0.66)"><path d="M0 0H13L14.4 1.4V14.4H0Z" fill="#9c9c52" stroke="#5c5c28" stroke-width=".9"/><rect x="2.6" y="0.6" width="8.6" height="6.4" fill="#f0f0f6"/><rect x="3.2" y="9" width="8.2" height="5.2" fill="#48483a"/><rect x="8.4" y="10" width="2" height="3.6" fill="#e8e8e8"/></g><path d="M132.5 59C134 54.5 129 51.5 124.5 55" fill="none" stroke="#2840c8" stroke-width="1.6"/><path d="M121 53.4L122 59.2L127.4 57.2Z" fill="#2840c8"/><path d="M144.5 59C143 54.5 148 51.5 152.5 55" fill="none" stroke="#a4a8b0" stroke-width="1.6"/><path d="M156 53.4L155 59.2L149.6 57.2Z" fill="#a4a8b0"/><rect x="173.5" y="48" width="15" height="15.5" fill="#e4e6ec" opacity=".8"/><path d="M176.5 48.8V61L179.6 58.2L181.9 63L184 62L181.8 57.4H186Z" fill="#fff" stroke="#222" stroke-width="1"/><path d="M204 49L207 52.4H205V54.6H208.6V52.6L211.6 55.6L208.6 58.6V56.6H205V60H207L204 63L201 60H203V56.6H199.4V58.6L196.4 55.6L199.4 52.6V54.6H203V52.4H201Z" fill="#8a8e9a" stroke="#4c505c" stroke-width=".8"/><g transform="translate(454.2,0) scale(-1,1)"><path d="M222.6 51.2A6 6 0 1 0 231.4 51.6" fill="none" stroke="#3e3e44" stroke-width="2.7"/><path d="M227 47.6L234 49.5L229 54.8Z" fill="#3e3e44"/></g><rect x="239.5" y="46.0" width="22.0" height="18.5" rx="3.2" fill="#cfd2de" stroke="#6a6c76" stroke-width="1"/><rect x="240.5" y="47.0" width="20.0" height="16.5" rx="2.4" fill="none" stroke="#eceef4" stroke-width="1" opacity=".35"/><rect x="245" y="49.5" width="12" height="11.5" fill="#8c8c92" stroke="#5c5c64" stroke-width="1"/><rect x="244.2" y="54.6" width="7" height="7" fill="#ff6060" opacity=".45" filter="url(#bl1)"/><rect x="245.6" y="55.6" width="4.6" height="5" fill="#fff4f4" stroke="#f07070" stroke-width=".8"/><rect x="270" y="49.5" width="5" height="11" fill="#9a8a8c" stroke="#b49a9c" stroke-width="1"/><rect x="271" y="54.4" width="3" height="5.2" fill="#fff" stroke="#f08080" stroke-width=".8"/><path d="M366.5 50.5H369.5L370.5 53H372.5L373.5 50.5H376.5L379 58.5V62H373.4V57H369.6V62H364V58.5Z" fill="#3a3a3a"/><rect x="365.6" y="58.4" width="2" height="2.2" fill="#eee"/><rect x="375.4" y="58.4" width="2" height="2.2" fill="#eee"/><rect x="367" y="54" width="1.2" height="2.4" fill="#ddd"/><rect x="374.6" y="54" width="1.2" height="2.4" fill="#ddd"/><path d="M367 52.5L366 56M376 52.5L377 56" stroke="#888" stroke-width=".7"/><rect x="395" y="48" width="16.5" height="15.5" fill="#1a1a1c"/><circle cx="403.2" cy="55.6" r="6" fill="#3a3a3e" stroke="#77777c" stroke-width=".9"/><path d="M400.6 53.2V57.2A2.7 2.4 0 0 0 406 57.2V53.2" fill="none" stroke="#b8b8bc" stroke-width="1.7"/><path d="M399.4 53.4H401.8M404.8 53.4H407.2" stroke="#b8b8bc" stroke-width="1"/><text x="427" y="61.6" font-family="Liberation Sans,sans-serif" font-size="17" fill="#1c6a12" stroke="#9be080" stroke-width="1.6" paint-order="stroke" opacity=".95">K</text><text x="427" y="61.6" font-family="Liberation Sans,sans-serif" font-size="17" fill="#1c6a12">K</text><path d="M435 58L440 61.4M441 57.8V62H436.8" stroke="#1c6a12" stroke-width="1.3" fill="none"/><rect x="447.5" y="47" width="21" height="17" rx="2.6" fill="#f6f6fa" stroke="#6c6c72"/><rect x="451" y="54.2" width="14" height="8" fill="#060606"/><path d="M451 53.6L451.6 49.6L464.6 51.6L464.2 53.8Z" fill="#060606"/><path d="M453 55.6H463" stroke="#fff" stroke-width="1" stroke-dasharray="1.6 1"/><path d="M454 50.6L457 52.4M458.6 51.2L461.4 53" stroke="#fff" stroke-width=".9"/><rect x="478" y="46" width="77" height="19" fill="#f1f2f6" opacity=".85"/><rect x="484" y="52.4" width="62" height="2.2" fill="#e4e6ea" stroke="#b8bac0" stroke-width=".6"/><path d="M543.5 49.5H550V58L546.8 61L543.5 58Z" fill="#e6e6ea" stroke="#8c8c94" stroke-width=".9"/><path d="M570.5 50L577 49.2L584 51V61L578 63L570.5 60.6Z" fill="#9cc8ec" stroke="#6aa0d0" stroke-width=".8" opacity=".9"/><path d="M572 51.5L577 51L582.5 52.4V60L578 61.4L572 59.6Z" fill="#c4e0f6" opacity=".8"/><rect x="593.5" y="49.5" width="13" height="12.5" fill="#c84444" stroke="#141414" stroke-width="1.2"/><path d="M593.5 62L606.5 49.5" stroke="#141414" stroke-width="1.2"/><rect x="612.5" y="46.0" width="22.0" height="18.5" rx="3.2" fill="#cfd2de" stroke="#6a6c76" stroke-width="1"/><rect x="613.5" y="47.0" width="20.0" height="16.5" rx="2.4" fill="none" stroke="#eceef4" stroke-width="1" opacity=".35"/><text x="623.6" y="62.2" font-family="Liberation Sans,sans-serif" font-size="18" font-weight="bold" text-anchor="middle" fill="#0c4a40" stroke="#0c4a40" stroke-width=".5">P</text><path d="M640.6 55.8H653C652 61.8 641.6 61.8 640.6 55.8Z" fill="#f01414"/><path d="M646.8 49V54.6M644.6 52.6L646.8 55L649 52.6M644.6 51.4H649" stroke="#111" stroke-width="1" fill="none"/><rect x="661" y="48" width="16" height="15.5" fill="#0c0c10"/><circle cx="665.0" cy="51.5" r="1.9" fill="#3a6ad0" filter="url(#bl1)" opacity=".9"/><circle cx="673.5" cy="51.5" r="1.9" fill="#c040b0" filter="url(#bl1)" opacity=".9"/><circle cx="669.0" cy="55.6" r="1.9" fill="#e0a030" filter="url(#bl1)" opacity=".9"/><circle cx="665.0" cy="60.0" r="1.9" fill="#d03030" filter="url(#bl1)" opacity=".9"/><circle cx="673.5" cy="59.6" r="1.9" fill="#30b060" filter="url(#bl1)" opacity=".9"/><path d="M693.5 51L700 48.6L707 51V57.6L700.6 63L694.4 58.6Z" fill="#78bcae" stroke="#3a7068" stroke-width="1.2"/><path d="M696 52.4L700.4 51L704.6 52.6V57L700.4 60.6L696.4 57.4Z" fill="#b4e4da"/><path d="M700.4 54V60" stroke="#4a8a80" stroke-width=".8"/><circle cx="722.6" cy="53.6" r="3.8" fill="#e8f4f0" stroke="#a0bab6" stroke-width=".8"/><rect x="721" y="57.4" width="3.2" height="3" fill="#b8c8c4"/><rect x="721.2" y="60" width="2.8" height="2.4" fill="#22332f"/><path d="M741.2 52L742.0 60.4M742.0 56.4L751.0 51.4M743.0 56.4L750.6 61.8" stroke="#2c3a38" stroke-width="1.9" fill="none"/><circle cx="741.0" cy="51.8" r="1.9" fill="#56706c"/><circle cx="751.4" cy="51.2" r="1.9" fill="#56706c"/><circle cx="751.0" cy="61.8" r="1.9" fill="#56706c"/><circle cx="742.0" cy="60.8" r="1.9" fill="#56706c"/><path d="M764.2 52L765.0 60.4M765.0 56.4L774.0 51.4M766.0 56.4L773.6 61.8" stroke="#2c3a38" stroke-width="1.9" fill="none"/><circle cx="764.0" cy="51.8" r="1.9" fill="#56706c"/><circle cx="774.4" cy="51.2" r="1.9" fill="#d02020"/><circle cx="774.0" cy="61.8" r="1.9" fill="#d02020"/><circle cx="765.0" cy="60.8" r="1.9" fill="#56706c"/><path d="M785.5 52L790 49.4H796L798.6 52.4V59L795 60.4L790.6 60L785.8 57Z" fill="#74b8aa" stroke="#3a786c" stroke-width="1"/><path d="M790.4 52.6H795.4V58.6H790.4Z" fill="#b8e6dc"/><rect x="796" y="59.4" width="2.4" height="3.6" fill="#1c2c2a"/><circle cx="812" cy="53.8" r="4.8" fill="#eef4f2" stroke="#98aaa6" stroke-width=".9"/><path d="M810 58H814V62.4H810Z" fill="#8c9a98"/><path d="M816.5 60.6C818.5 58.4 821.5 58.4 823.4 60.6C821.4 62.8 818.5 62.8 816.5 60.6Z" fill="#111"/><circle cx="820" cy="60.6" r="1" fill="#ddd"/><rect x="838.5" y="49.5" width="14.5" height="12" rx="1" fill="#f4f4fa" stroke="#3a3a4a" stroke-width="1.1"/><rect x="840.6" y="51.6" width="10.4" height="7.8" fill="#a0e0e0"/><path d="M840.6 54.2H851M840.6 56.8H851M844 51.6V59.4M847.6 51.6V59.4" stroke="#2a7878" stroke-width=".7"/><circle cx="877.5" cy="50.6" r="2.4" fill="#555"/><rect x="876" y="51" width="3" height="3" fill="#333"/><rect x="874.5" y="52.8" width="9.5" height="7" fill="#1418c0" stroke="#d8d8e0" stroke-width=".8"/><path d="M878 53L884 58V53Z" fill="#4a8ae8"/><path d="M871 60H884.6V63H871Z" fill="#2a2a2a"/><circle cx="900" cy="51" r="2.8" fill="#3a3a3e"/><rect x="898.9" y="52" width="2.2" height="6" fill="#3a3a3e"/><path d="M894 58H906V63H894Z" fill="#2a2a2e"/><path d="M77.7 76.2h9.6l-4.8 5.2Z" fill="#000"/><path d="M97.5 70.0V86.6" stroke="#7d7f8a" stroke-width="1"/><path d="M128.5 70.0V86.6" stroke="#7d7f8a" stroke-width="1"/><path d="M366.5 70.0V86.6" stroke="#7d7f8a" stroke-width="1"/><path d="M397.5 70.0V86.6" stroke="#7d7f8a" stroke-width="1"/><path d="M451.5 70.0V86.6" stroke="#7d7f8a" stroke-width="1"/><path d="M528.5 70.0V86.6" stroke="#7d7f8a" stroke-width="1"/><path d="M559.5 70.0V86.6" stroke="#7d7f8a" stroke-width="1"/><path d="M590.5 70.0V86.6" stroke="#7d7f8a" stroke-width="1"/><rect x="157.0" y="69.2" width="22.0" height="18.5" rx="3.2" fill="#cfd2de" stroke="#6a6c76" stroke-width="1"/><rect x="158.0" y="70.2" width="20.0" height="16.5" rx="2.4" fill="none" stroke="#eceef4" stroke-width="1" opacity=".35"/><g transform="translate(114.00,78.90)"><g transform="scale(1.00)"><circle cx="0" cy="-5.3" r="2.5" fill="#4a4e57"/><rect x="-0.8" y="-4" width="1.6" height="6" fill="#4a4e57"/><path d="M-7 2.2H7V6.6H3.4V5.2H-3.4V6.6H-7Z" fill="#4a4e57"/><rect x="-4.6" y="0.7" width="2" height="1.5" fill="#4a4e57" opacity=".7"/></g></g><g transform="translate(145.00,78.50)"><polygon points="0.0,-7.0 6.7,-3.6 6.3,3.0 1.0,7.1 -6.1,3.5 -6.8,-3.5" fill="none" stroke="#33343b" stroke-width="1.2" stroke-linejoin="round"/><path d="M-6.8 -3.5L1 -0.7L6.7 -3.6M1 -0.7V7.1" stroke="#33343b" stroke-width="1.2" fill="none"/></g><g transform="translate(168.00,78.50)"><path d="M0 -7V0.6L-6.1 3.5M0 0.6L6.3 3" stroke="#9a9aa0" stroke-width="1" fill="none"/><polygon points="0.0,-7.0 6.7,-3.6 6.3,3.0 1.0,7.1 -6.1,3.5 -6.8,-3.5" fill="none" stroke="#33343b" stroke-width="1.2" stroke-linejoin="round"/><path d="M-6.8 -3.5L1 -0.7L6.7 -3.6M1 -0.7V7.1" stroke="#33343b" stroke-width="1.2" fill="none"/></g><g transform="translate(191.00,78.50)"><polygon points="0.0,-7.0 6.7,-3.6 6.3,3.0 1.0,7.1 -6.1,3.5 -6.8,-3.5" fill="url(#gLit)" stroke="#2f8c8c" stroke-width="1.3" stroke-linejoin="round"/><path d="M-5.5 -3L1 -0.5L5.8 -3.2" stroke="#e8ffff" stroke-width="1" fill="none" opacity=".8"/></g><g transform="translate(214.00,78.50)"><path d="M-7 3L-2 8H5L-1 3Z" fill="#505058" opacity=".55"/><polygon points="0.0,-7.0 6.7,-3.6 1.0,-0.7 -6.8,-3.5" fill="#79d9d0"/><polygon points="-6.8,-3.5 1.0,-0.7 1.0,7.1 -6.1,3.5" fill="#38a59c"/><polygon points="1.0,-0.7 6.7,-3.6 6.3,3.0 1.0,7.1" fill="#b3eee8"/><polygon points="0.0,-7.0 6.7,-3.6 6.3,3.0 1.0,7.1 -6.1,3.5 -6.8,-3.5" fill="none" stroke="#173f3f" stroke-width="1.1" stroke-linejoin="round"/><path d="M-6.8 -3.5L1 -0.7L6.7 -3.6M1 -0.7V7.1" stroke="#173f3f" stroke-width="1" fill="none"/></g><g transform="translate(237.00,78.50)"><path d="M-7 3L-2 8H5L-1 3Z" fill="#505058" opacity=".55"/><polygon points="0.0,-7.0 6.7,-3.6 1.0,-0.7 -6.8,-3.5" fill="#6fd2c9"/><polygon points="-6.8,-3.5 1.0,-0.7 1.0,7.1 -6.1,3.5" fill="#2f9389"/><polygon points="1.0,-0.7 6.7,-3.6 6.3,3.0 1.0,7.1" fill="#9be6de"/><polygon points="0.0,-7.0 6.7,-3.6 6.3,3.0 1.0,7.1 -6.1,3.5 -6.8,-3.5" fill="none" stroke="#2a6a66" stroke-width="1.1" stroke-linejoin="round"/><path d="M-6.8 -3.5L1 -0.7L6.7 -3.6M1 -0.7V7.1" stroke="#2a6a66" stroke-width="1" fill="none"/></g><g transform="translate(260.00,78.50)"><polygon points="-1.4,-6.5 6.6,-3.5 6.6,7 -1.4,3.5" fill="#2f8f86" stroke="#1f5a58" stroke-width=".8"/><polygon points="-3.8,-6.5 4.2,-3.5 4.2,7 -3.8,3.5" fill="#4fb5ab" stroke="#1f5a58" stroke-width=".8"/><polygon points="-6.4,-6.5 1.6,-3.5 1.6,7 -6.4,3.5" fill="#a8ece4" stroke="#1f5a58" stroke-width=".8"/></g><g transform="translate(283.00,78.50)"><path d="M-7 3L-2 8H5L-1 3Z" fill="#505058" opacity=".55"/><polygon points="0.0,-7.0 6.7,-3.6 1.0,-0.7 -6.8,-3.5" fill="#cdb0aa"/><polygon points="-6.8,-3.5 1.0,-0.7 1.0,7.1 -6.1,3.5" fill="#8c6a64"/><polygon points="1.0,-0.7 6.7,-3.6 6.3,3.0 1.0,7.1" fill="#ecd6d0"/><polygon points="0.0,-7.0 6.7,-3.6 6.3,3.0 1.0,7.1 -6.1,3.5 -6.8,-3.5" fill="none" stroke="#3a2a28" stroke-width="1.1" stroke-linejoin="round"/><path d="M-6.8 -3.5L1 -0.7L6.7 -3.6M1 -0.7V7.1" stroke="#3a2a28" stroke-width="1" fill="none"/></g><g transform="translate(306.00,78.50)"><polygon points="-1.3,-6 6.7,-4 6.7,6.5 -1.3,4" fill="#5c5c5c" stroke="#3c3c3c" stroke-width=".7"/><polygon points="-3.7,-6 4.3,-4 4.3,6.5 -3.7,4" fill="#747474" stroke="#3c3c3c" stroke-width=".7"/><polygon points="-6.3,-6 1.7,-4 1.7,6.5 -6.3,4" fill="#8c8c8c" stroke="#3c3c3c" stroke-width=".7"/><circle cx="-1.2" cy="1.3" r="3.4" fill="#9a9a9a" stroke="#2a2a2a" stroke-width=".6"/><text x="-1.2" y="3.9" font-family="Liberation Sans,sans-serif" font-size="7.5" font-weight="bold" text-anchor="middle" fill="#111">s</text></g><g transform="translate(329.00,78.50)"><rect x="-8" y="-8" width="16.5" height="16.5" fill="#c9c9c9"/><path d="M-7 3L-2 8H5L-1 3Z" fill="#505058" opacity=".55"/><polygon points="0.0,-7.0 6.7,-3.6 1.0,-0.7 -6.8,-3.5" fill="#c9a0e6"/><polygon points="-6.8,-3.5 1.0,-0.7 1.0,7.1 -6.1,3.5" fill="#9466b8"/><polygon points="1.0,-0.7 6.7,-3.6 6.3,3.0 1.0,7.1" fill="#e6ccf4"/><polygon points="0.0,-7.0 6.7,-3.6 6.3,3.0 1.0,7.1 -6.1,3.5 -6.8,-3.5" fill="none" stroke="#5a4070" stroke-width="1.1" stroke-linejoin="round"/><path d="M-6.8 -3.5L1 -0.7L6.7 -3.6M1 -0.7V7.1" stroke="#5a4070" stroke-width="1" fill="none"/></g><g transform="translate(352.00,78.50)"><path d="M-7 3L-2 8H5L-1 3Z" fill="#505058" opacity=".55"/><polygon points="0.0,-7.0 6.7,-3.6 1.0,-0.7 -6.8,-3.5" fill="#8ad8d0"/><polygon points="-6.8,-3.5 1.0,-0.7 1.0,7.1 -6.1,3.5" fill="#46a096"/><polygon points="1.0,-0.7 6.7,-3.6 6.3,3.0 1.0,7.1" fill="#a4e4dc"/><polygon points="0.0,-7.0 6.7,-3.6 6.3,3.0 1.0,7.1 -6.1,3.5 -6.8,-3.5" fill="none" stroke="#1f4f4c" stroke-width="1.1" stroke-linejoin="round"/><path d="M-6.8 -3.5L1 -0.7L6.7 -3.6M1 -0.7V7.1" stroke="#1f4f4c" stroke-width="1" fill="none"/><path d="M-3.4 -5.2L3.9 -2.2M3.4 -5.3L-2.9 -2.1M-6.4 0L1 3.2L6.5 -0.3M-2.9 -2.1V5.3M3.9 -2.2V5" stroke="#1f4f4c" stroke-width=".9" fill="none"/></g><g transform="translate(383.00,78.50)"><rect x="-8" y="-8" width="16" height="16" fill="#d2d2d2"/><text x="0" y="6" font-family="Liberation Sans,sans-serif" font-size="16.5" font-weight="bold" text-anchor="middle" fill="#000" transform="scale(.7,1)" stroke="#000" stroke-width="1.2">G</text></g><g transform="translate(413.50,78.50)"><path d="M-3.2 -1V-3.4A3.2 3.2 0 0 1 3.2 -3.4V-1" fill="none" stroke="#3f9fdc" stroke-width="2.5"/><rect x="-5.7" y="-1.6" width="11.2" height="9.4" rx="1" fill="#eda034" stroke="#c88420" stroke-width=".6"/><rect x="-4.8" y="-0.8" width="9.4" height="3" fill="#fad488" opacity=".85"/><rect x="-0.9" y="1.8" width="1.7" height="3.2" fill="#5a3a08"/></g><g transform="translate(436.50,78.50)"><path d="M-7.4 0.6C-4.5 -4.2 3.5 -4.4 7.6 0.8C4 4.4 -4 4 -7.4 0.6Z" fill="#f4f4f4" stroke="#0a0a0a" stroke-width="1.1"/><path d="M-7.6 0.4C-4.5 -5 3.8 -5 7.8 0.6C3.6 -2.6 -4 -2.6 -7.6 0.4Z" fill="#0a0a0a"/><circle cx="0" cy="0.5" r="2.5" fill="#0a0a0a"/><circle cx="-0.8" cy="-0.2" r=".7" fill="#ddd"/><path d="M3 3.4L7.4 1.4" stroke="#0a0a0a" stroke-width="1.2"/></g><g transform="translate(468.50,78.50)"><circle cx="-0.3" cy="-5.2" r="2.6" fill="#0c0c0c"/><path d="M-1.6 -3.5H1L1.8 1.5H-2.4Z" fill="#0c0c0c"/><path d="M-7.2 0.8L-2.5 -1.2H2.5L7.2 1.2V7H-7.2Z" fill="#0c0c0c"/><path d="M-5.6 1.4H-2.6V2.6H-5.6Z" fill="#aaa"/><path d="M-6 4.4H6" stroke="#555" stroke-width=".7"/></g><g transform="translate(491.50,78.50)"><path d="M-8 7A8 9 0 0 1 8 7Z" fill="#f06060" opacity=".85"/><circle cx="0" cy="-1" r="7" fill="#f47070" opacity=".55"/><circle cx="0.2" cy="-5" r="2.3" fill="#6a0808"/><path d="M-1.2 -3.5H1.4L2 1.2H-2Z" fill="#6a0808"/><path d="M-7.2 1L-2.5 -0.8H2.5L7.2 1.2V7H-7.2Z" fill="#8a0c0c"/><path d="M-5.6 1.6H-2.8V2.7H-5.6Z" fill="#f0b0b0"/><path d="M1.5 2L5 3.6" stroke="#e05050" stroke-width="1"/></g><g transform="translate(512.00,78.50)"><text x="2.6" y="6.6" font-family="Liberation Sans,sans-serif" font-size="14.5" text-anchor="middle" fill="#000" stroke="#000" stroke-width=".15">S</text><rect x="-6.4" y="1.4" width="1.1" height="5.4" fill="#c81818"/></g><g transform="translate(545.00,78.50)"><rect x="-6.4" y="-6.4" width="13" height="13.2" fill="#f6f8ff" stroke="#161a3a" stroke-width="1.2"/><rect x="-5.8" y="4.2" width="11.8" height="2" fill="#3a6ad8"/></g><g transform="translate(576.50,78.50)"><circle cx="0.6" cy="-5.8" r="2.2" fill="#666"/><rect x="-1" y="-5" width="3.2" height="2.4" fill="#444"/><rect x="-3.4" y="-3.4" width="10" height="9" fill="#fff"/><rect x="-2.4" y="-2.4" width="9" height="8" fill="#0a0a0a"/><path d="M-6.4 4.6H6.6V7.2H-6.4Z" fill="#3a3a3a"/><path d="M-2.4 5.6L6.6 -2.4V5.6Z" fill="#3c3c3c"/></g><g transform="translate(607.00,78.50)"><rect x="-0.6" y="-6.6" width="7.2" height="7" fill="#fff" stroke="#1a1a1a" stroke-width="1.2"/><rect x="-0.6" y="-6.6" width="7.2" height="1.8" fill="#1a1a1a"/><rect x="-6.6" y="0.2" width="6.4" height="6.2" fill="#f4f4f8" stroke="#555a66" stroke-width="1"/><path d="M-4.6 4.4L2.6 -2.6M-1.4 -2.9H3V1.4" stroke="#0a0a0a" stroke-width="2" fill="none"/></g><g transform="translate(629.50,78.50)"><rect x="-5.2" y="-5.6" width="10.6" height="11.4" fill="#fdfdff" stroke="#0a0a0a" stroke-width="1.5"/><rect x="-5.9" y="-6.4" width="12" height="2.9" fill="#0a0a0a"/></g><path d="M1096.7 76.2h9.6l-4.8 5.2Z" fill="#000"/><path d="M1116.5 70.0V86.6" stroke="#7d7f8a" stroke-width="1"/><path d="M1147.5 70.0V86.6" stroke="#7d7f8a" stroke-width="1"/><path d="M1385.5 70.0V86.6" stroke="#7d7f8a" stroke-width="1"/><path d="M1416.5 70.0V86.6" stroke="#7d7f8a" stroke-width="1"/><path d="M1470.5 70.0V86.6" stroke="#7d7f8a" stroke-width="1"/><path d="M1547.5 70.0V86.6" stroke="#7d7f8a" stroke-width="1"/><path d="M1578.5 70.0V86.6" stroke="#7d7f8a" stroke-width="1"/><path d="M1609.5 70.0V86.6" stroke="#7d7f8a" stroke-width="1"/><rect x="1153.0" y="69.2" width="22.0" height="18.5" rx="3.2" fill="#cfd2de" stroke="#6a6c76" stroke-width="1"/><rect x="1154.0" y="70.2" width="20.0" height="16.5" rx="2.4" fill="none" stroke="#eceef4" stroke-width="1" opacity=".35"/><g transform="translate(1133.00,78.90)"><g transform="scale(1.00)"><circle cx="0" cy="-5.3" r="2.5" fill="#4a4e57"/><rect x="-0.8" y="-4" width="1.6" height="6" fill="#4a4e57"/><path d="M-7 2.2H7V6.6H3.4V5.2H-3.4V6.6H-7Z" fill="#4a4e57"/><rect x="-4.6" y="0.7" width="2" height="1.5" fill="#4a4e57" opacity=".7"/></g></g><g transform="translate(1164.00,78.50)"><polygon points="0.0,-7.0 6.7,-3.6 6.3,3.0 1.0,7.1 -6.1,3.5 -6.8,-3.5" fill="none" stroke="#33343b" stroke-width="1.2" stroke-linejoin="round"/><path d="M-6.8 -3.5L1 -0.7L6.7 -3.6M1 -0.7V7.1" stroke="#33343b" stroke-width="1.2" fill="none"/></g><g transform="translate(1187.00,78.50)"><path d="M0 -7V0.6L-6.1 3.5M0 0.6L6.3 3" stroke="#9a9aa0" stroke-width="1" fill="none"/><polygon points="0.0,-7.0 6.7,-3.6 6.3,3.0 1.0,7.1 -6.1,3.5 -6.8,-3.5" fill="none" stroke="#33343b" stroke-width="1.2" stroke-linejoin="round"/><path d="M-6.8 -3.5L1 -0.7L6.7 -3.6M1 -0.7V7.1" stroke="#33343b" stroke-width="1.2" fill="none"/></g><g transform="translate(1210.00,78.50)"><polygon points="0.0,-7.0 6.7,-3.6 6.3,3.0 1.0,7.1 -6.1,3.5 -6.8,-3.5" fill="url(#gLit)" stroke="#2f8c8c" stroke-width="1.3" stroke-linejoin="round"/><path d="M-5.5 -3L1 -0.5L5.8 -3.2" stroke="#e8ffff" stroke-width="1" fill="none" opacity=".8"/></g><g transform="translate(1233.00,78.50)"><path d="M-7 3L-2 8H5L-1 3Z" fill="#505058" opacity=".55"/><polygon points="0.0,-7.0 6.7,-3.6 1.0,-0.7 -6.8,-3.5" fill="#79d9d0"/><polygon points="-6.8,-3.5 1.0,-0.7 1.0,7.1 -6.1,3.5" fill="#38a59c"/><polygon points="1.0,-0.7 6.7,-3.6 6.3,3.0 1.0,7.1" fill="#b3eee8"/><polygon points="0.0,-7.0 6.7,-3.6 6.3,3.0 1.0,7.1 -6.1,3.5 -6.8,-3.5" fill="none" stroke="#173f3f" stroke-width="1.1" stroke-linejoin="round"/><path d="M-6.8 -3.5L1 -0.7L6.7 -3.6M1 -0.7V7.1" stroke="#173f3f" stroke-width="1" fill="none"/></g><g transform="translate(1256.00,78.50)"><path d="M-7 3L-2 8H5L-1 3Z" fill="#505058" opacity=".55"/><polygon points="0.0,-7.0 6.7,-3.6 1.0,-0.7 -6.8,-3.5" fill="#6fd2c9"/><polygon points="-6.8,-3.5 1.0,-0.7 1.0,7.1 -6.1,3.5" fill="#2f9389"/><polygon points="1.0,-0.7 6.7,-3.6 6.3,3.0 1.0,7.1" fill="#9be6de"/><polygon points="0.0,-7.0 6.7,-3.6 6.3,3.0 1.0,7.1 -6.1,3.5 -6.8,-3.5" fill="none" stroke="#2a6a66" stroke-width="1.1" stroke-linejoin="round"/><path d="M-6.8 -3.5L1 -0.7L6.7 -3.6M1 -0.7V7.1" stroke="#2a6a66" stroke-width="1" fill="none"/></g><g transform="translate(1279.00,78.50)"><polygon points="-1.4,-6.5 6.6,-3.5 6.6,7 -1.4,3.5" fill="#2f8f86" stroke="#1f5a58" stroke-width=".8"/><polygon points="-3.8,-6.5 4.2,-3.5 4.2,7 -3.8,3.5" fill="#4fb5ab" stroke="#1f5a58" stroke-width=".8"/><polygon points="-6.4,-6.5 1.6,-3.5 1.6,7 -6.4,3.5" fill="#a8ece4" stroke="#1f5a58" stroke-width=".8"/></g><g transform="translate(1302.00,78.50)"><path d="M-7 3L-2 8H5L-1 3Z" fill="#505058" opacity=".55"/><polygon points="0.0,-7.0 6.7,-3.6 1.0,-0.7 -6.8,-3.5" fill="#cdb0aa"/><polygon points="-6.8,-3.5 1.0,-0.7 1.0,7.1 -6.1,3.5" fill="#8c6a64"/><polygon points="1.0,-0.7 6.7,-3.6 6.3,3.0 1.0,7.1" fill="#ecd6d0"/><polygon points="0.0,-7.0 6.7,-3.6 6.3,3.0 1.0,7.1 -6.1,3.5 -6.8,-3.5" fill="none" stroke="#3a2a28" stroke-width="1.1" stroke-linejoin="round"/><path d="M-6.8 -3.5L1 -0.7L6.7 -3.6M1 -0.7V7.1" stroke="#3a2a28" stroke-width="1" fill="none"/></g><g transform="translate(1325.00,78.50)"><polygon points="-1.3,-6 6.7,-4 6.7,6.5 -1.3,4" fill="#5c5c5c" stroke="#3c3c3c" stroke-width=".7"/><polygon points="-3.7,-6 4.3,-4 4.3,6.5 -3.7,4" fill="#747474" stroke="#3c3c3c" stroke-width=".7"/><polygon points="-6.3,-6 1.7,-4 1.7,6.5 -6.3,4" fill="#8c8c8c" stroke="#3c3c3c" stroke-width=".7"/><circle cx="-1.2" cy="1.3" r="3.4" fill="#9a9a9a" stroke="#2a2a2a" stroke-width=".6"/><text x="-1.2" y="3.9" font-family="Liberation Sans,sans-serif" font-size="7.5" font-weight="bold" text-anchor="middle" fill="#111">s</text></g><g transform="translate(1348.00,78.50)"><rect x="-8" y="-8" width="16.5" height="16.5" fill="#c9c9c9"/><path d="M-7 3L-2 8H5L-1 3Z" fill="#505058" opacity=".55"/><polygon points="0.0,-7.0 6.7,-3.6 1.0,-0.7 -6.8,-3.5" fill="#c9a0e6"/><polygon points="-6.8,-3.5 1.0,-0.7 1.0,7.1 -6.1,3.5" fill="#9466b8"/><polygon points="1.0,-0.7 6.7,-3.6 6.3,3.0 1.0,7.1" fill="#e6ccf4"/><polygon points="0.0,-7.0 6.7,-3.6 6.3,3.0 1.0,7.1 -6.1,3.5 -6.8,-3.5" fill="none" stroke="#5a4070" stroke-width="1.1" stroke-linejoin="round"/><path d="M-6.8 -3.5L1 -0.7L6.7 -3.6M1 -0.7V7.1" stroke="#5a4070" stroke-width="1" fill="none"/></g><g transform="translate(1371.00,78.50)"><path d="M-7 3L-2 8H5L-1 3Z" fill="#505058" opacity=".55"/><polygon points="0.0,-7.0 6.7,-3.6 1.0,-0.7 -6.8,-3.5" fill="#8ad8d0"/><polygon points="-6.8,-3.5 1.0,-0.7 1.0,7.1 -6.1,3.5" fill="#46a096"/><polygon points="1.0,-0.7 6.7,-3.6 6.3,3.0 1.0,7.1" fill="#a4e4dc"/><polygon points="0.0,-7.0 6.7,-3.6 6.3,3.0 1.0,7.1 -6.1,3.5 -6.8,-3.5" fill="none" stroke="#1f4f4c" stroke-width="1.1" stroke-linejoin="round"/><path d="M-6.8 -3.5L1 -0.7L6.7 -3.6M1 -0.7V7.1" stroke="#1f4f4c" stroke-width="1" fill="none"/><path d="M-3.4 -5.2L3.9 -2.2M3.4 -5.3L-2.9 -2.1M-6.4 0L1 3.2L6.5 -0.3M-2.9 -2.1V5.3M3.9 -2.2V5" stroke="#1f4f4c" stroke-width=".9" fill="none"/></g><g transform="translate(1402.00,78.50)"><rect x="-8" y="-8" width="16" height="16" fill="#d2d2d2"/><text x="0" y="6" font-family="Liberation Sans,sans-serif" font-size="16.5" font-weight="bold" text-anchor="middle" fill="#000" transform="scale(.7,1)" stroke="#000" stroke-width="1.2">G</text></g><g transform="translate(1432.50,78.50)"><path d="M-3.2 -1V-3.4A3.2 3.2 0 0 1 3.2 -3.4V-1" fill="none" stroke="#3f9fdc" stroke-width="2.5"/><rect x="-5.7" y="-1.6" width="11.2" height="9.4" rx="1" fill="#eda034" stroke="#c88420" stroke-width=".6"/><rect x="-4.8" y="-0.8" width="9.4" height="3" fill="#fad488" opacity=".85"/><rect x="-0.9" y="1.8" width="1.7" height="3.2" fill="#5a3a08"/></g><g transform="translate(1455.50,78.50)"><path d="M-7.4 0.6C-4.5 -4.2 3.5 -4.4 7.6 0.8C4 4.4 -4 4 -7.4 0.6Z" fill="#f4f4f4" stroke="#0a0a0a" stroke-width="1.1"/><path d="M-7.6 0.4C-4.5 -5 3.8 -5 7.8 0.6C3.6 -2.6 -4 -2.6 -7.6 0.4Z" fill="#0a0a0a"/><circle cx="0" cy="0.5" r="2.5" fill="#0a0a0a"/><circle cx="-0.8" cy="-0.2" r=".7" fill="#ddd"/><path d="M3 3.4L7.4 1.4" stroke="#0a0a0a" stroke-width="1.2"/></g><g transform="translate(1487.50,78.50)"><circle cx="-0.3" cy="-5.2" r="2.6" fill="#0c0c0c"/><path d="M-1.6 -3.5H1L1.8 1.5H-2.4Z" fill="#0c0c0c"/><path d="M-7.2 0.8L-2.5 -1.2H2.5L7.2 1.2V7H-7.2Z" fill="#0c0c0c"/><path d="M-5.6 1.4H-2.6V2.6H-5.6Z" fill="#aaa"/><path d="M-6 4.4H6" stroke="#555" stroke-width=".7"/></g><g transform="translate(1510.50,78.50)"><path d="M-8 7A8 9 0 0 1 8 7Z" fill="#f06060" opacity=".85"/><circle cx="0" cy="-1" r="7" fill="#f47070" opacity=".55"/><circle cx="0.2" cy="-5" r="2.3" fill="#6a0808"/><path d="M-1.2 -3.5H1.4L2 1.2H-2Z" fill="#6a0808"/><path d="M-7.2 1L-2.5 -0.8H2.5L7.2 1.2V7H-7.2Z" fill="#8a0c0c"/><path d="M-5.6 1.6H-2.8V2.7H-5.6Z" fill="#f0b0b0"/><path d="M1.5 2L5 3.6" stroke="#e05050" stroke-width="1"/></g><g transform="translate(1531.00,78.50)"><text x="2.6" y="6.6" font-family="Liberation Sans,sans-serif" font-size="14.5" text-anchor="middle" fill="#000" stroke="#000" stroke-width=".15">S</text><rect x="-6.4" y="1.4" width="1.1" height="5.4" fill="#c81818"/></g><g transform="translate(1564.00,78.50)"><rect x="-6.4" y="-6.4" width="13" height="13.2" fill="#f6f8ff" stroke="#161a3a" stroke-width="1.2"/><rect x="-5.8" y="4.2" width="11.8" height="2" fill="#3a6ad8"/></g><g transform="translate(1595.50,78.50)"><circle cx="0.6" cy="-5.8" r="2.2" fill="#666"/><rect x="-1" y="-5" width="3.2" height="2.4" fill="#444"/><rect x="-3.4" y="-3.4" width="10" height="9" fill="#fff"/><rect x="-2.4" y="-2.4" width="9" height="8" fill="#0a0a0a"/><path d="M-6.4 4.6H6.6V7.2H-6.4Z" fill="#3a3a3a"/><path d="M-2.4 5.6L6.6 -2.4V5.6Z" fill="#3c3c3c"/></g><g transform="translate(1626.00,78.50)"><rect x="-0.6" y="-6.6" width="7.2" height="7" fill="#fff" stroke="#1a1a1a" stroke-width="1.2"/><rect x="-0.6" y="-6.6" width="7.2" height="1.8" fill="#1a1a1a"/><rect x="-6.6" y="0.2" width="6.4" height="6.2" fill="#f4f4f8" stroke="#555a66" stroke-width="1"/><path d="M-4.6 4.4L2.6 -2.6M-1.4 -2.9H3V1.4" stroke="#0a0a0a" stroke-width="2" fill="none"/></g><g transform="translate(1648.50,78.50)"><rect x="-5.2" y="-5.6" width="10.6" height="11.4" fill="#fdfdff" stroke="#0a0a0a" stroke-width="1.5"/><rect x="-5.9" y="-6.4" width="12" height="2.9" fill="#0a0a0a"/></g><path d="M77.7 361.2h9.6l-4.8 5.2Z" fill="#000"/><path d="M97.5 355.0V371.6" stroke="#7d7f8a" stroke-width="1"/><path d="M128.5 355.0V371.6" stroke="#7d7f8a" stroke-width="1"/><path d="M366.5 355.0V371.6" stroke="#7d7f8a" stroke-width="1"/><path d="M397.5 355.0V371.6" stroke="#7d7f8a" stroke-width="1"/><path d="M451.5 355.0V371.6" stroke="#7d7f8a" stroke-width="1"/><path d="M528.5 355.0V371.6" stroke="#7d7f8a" stroke-width="1"/><path d="M559.5 355.0V371.6" stroke="#7d7f8a" stroke-width="1"/><path d="M590.5 355.0V371.6" stroke="#7d7f8a" stroke-width="1"/><rect x="180.0" y="354.2" width="22.0" height="18.5" rx="3.2" fill="#cfd2de" stroke="#6a6c76" stroke-width="1"/><rect x="181.0" y="355.2" width="20.0" height="16.5" rx="2.4" fill="none" stroke="#eceef4" stroke-width="1" opacity=".35"/><rect x="480.5" y="354.2" width="22.0" height="18.5" rx="3.2" fill="#cfd2de" stroke="#6a6c76" stroke-width="1"/><rect x="481.5" y="355.2" width="20.0" height="16.5" rx="2.4" fill="none" stroke="#eceef4" stroke-width="1" opacity=".35"/><g transform="translate(114.00,363.90)"><g transform="scale(1.00)"><circle cx="0" cy="-5.3" r="2.5" fill="#4a4e57"/><rect x="-0.8" y="-4" width="1.6" height="6" fill="#4a4e57"/><path d="M-7 2.2H7V6.6H3.4V5.2H-3.4V6.6H-7Z" fill="#4a4e57"/><rect x="-4.6" y="0.7" width="2" height="1.5" fill="#4a4e57" opacity=".7"/></g></g><g transform="translate(145.00,363.50)"><polygon points="0.0,-7.0 6.7,-3.6 6.3,3.0 1.0,7.1 -6.1,3.5 -6.8,-3.5" fill="none" stroke="#33343b" stroke-width="1.2" stroke-linejoin="round"/><path d="M-6.8 -3.5L1 -0.7L6.7 -3.6M1 -0.7V7.1" stroke="#33343b" stroke-width="1.2" fill="none"/></g><g transform="translate(168.00,363.50)"><path d="M0 -7V0.6L-6.1 3.5M0 0.6L6.3 3" stroke="#9a9aa0" stroke-width="1" fill="none"/><polygon points="0.0,-7.0 6.7,-3.6 6.3,3.0 1.0,7.1 -6.1,3.5 -6.8,-3.5" fill="none" stroke="#33343b" stroke-width="1.2" stroke-linejoin="round"/><path d="M-6.8 -3.5L1 -0.7L6.7 -3.6M1 -0.7V7.1" stroke="#33343b" stroke-width="1.2" fill="none"/></g><g transform="translate(191.00,363.50)"><polygon points="0.0,-7.0 6.7,-3.6 6.3,3.0 1.0,7.1 -6.1,3.5 -6.8,-3.5" fill="url(#gLit)" stroke="#2f8c8c" stroke-width="1.3" stroke-linejoin="round"/><path d="M-5.5 -3L1 -0.5L5.8 -3.2" stroke="#e8ffff" stroke-width="1" fill="none" opacity=".8"/></g><g transform="translate(214.00,363.50)"><path d="M-7 3L-2 8H5L-1 3Z" fill="#505058" opacity=".55"/><polygon points="0.0,-7.0 6.7,-3.6 1.0,-0.7 -6.8,-3.5" fill="#79d9d0"/><polygon points="-6.8,-3.5 1.0,-0.7 1.0,7.1 -6.1,3.5" fill="#38a59c"/><polygon points="1.0,-0.7 6.7,-3.6 6.3,3.0 1.0,7.1" fill="#b3eee8"/><polygon points="0.0,-7.0 6.7,-3.6 6.3,3.0 1.0,7.1 -6.1,3.5 -6.8,-3.5" fill="none" stroke="#173f3f" stroke-width="1.1" stroke-linejoin="round"/><path d="M-6.8 -3.5L1 -0.7L6.7 -3.6M1 -0.7V7.1" stroke="#173f3f" stroke-width="1" fill="none"/></g><g transform="translate(237.00,363.50)"><path d="M-7 3L-2 8H5L-1 3Z" fill="#505058" opacity=".55"/><polygon points="0.0,-7.0 6.7,-3.6 1.0,-0.7 -6.8,-3.5" fill="#6fd2c9"/><polygon points="-6.8,-3.5 1.0,-0.7 1.0,7.1 -6.1,3.5" fill="#2f9389"/><polygon points="1.0,-0.7 6.7,-3.6 6.3,3.0 1.0,7.1" fill="#9be6de"/><polygon points="0.0,-7.0 6.7,-3.6 6.3,3.0 1.0,7.1 -6.1,3.5 -6.8,-3.5" fill="none" stroke="#2a6a66" stroke-width="1.1" stroke-linejoin="round"/><path d="M-6.8 -3.5L1 -0.7L6.7 -3.6M1 -0.7V7.1" stroke="#2a6a66" stroke-width="1" fill="none"/></g><g transform="translate(260.00,363.50)"><polygon points="-1.4,-6.5 6.6,-3.5 6.6,7 -1.4,3.5" fill="#2f8f86" stroke="#1f5a58" stroke-width=".8"/><polygon points="-3.8,-6.5 4.2,-3.5 4.2,7 -3.8,3.5" fill="#4fb5ab" stroke="#1f5a58" stroke-width=".8"/><polygon points="-6.4,-6.5 1.6,-3.5 1.6,7 -6.4,3.5" fill="#a8ece4" stroke="#1f5a58" stroke-width=".8"/></g><g transform="translate(283.00,363.50)"><path d="M-7 3L-2 8H5L-1 3Z" fill="#505058" opacity=".55"/><polygon points="0.0,-7.0 6.7,-3.6 1.0,-0.7 -6.8,-3.5" fill="#cdb0aa"/><polygon points="-6.8,-3.5 1.0,-0.7 1.0,7.1 -6.1,3.5" fill="#8c6a64"/><polygon points="1.0,-0.7 6.7,-3.6 6.3,3.0 1.0,7.1" fill="#ecd6d0"/><polygon points="0.0,-7.0 6.7,-3.6 6.3,3.0 1.0,7.1 -6.1,3.5 -6.8,-3.5" fill="none" stroke="#3a2a28" stroke-width="1.1" stroke-linejoin="round"/><path d="M-6.8 -3.5L1 -0.7L6.7 -3.6M1 -0.7V7.1" stroke="#3a2a28" stroke-width="1" fill="none"/></g><g transform="translate(306.00,363.50)"><polygon points="-1.3,-6 6.7,-4 6.7,6.5 -1.3,4" fill="#5c5c5c" stroke="#3c3c3c" stroke-width=".7"/><polygon points="-3.7,-6 4.3,-4 4.3,6.5 -3.7,4" fill="#747474" stroke="#3c3c3c" stroke-width=".7"/><polygon points="-6.3,-6 1.7,-4 1.7,6.5 -6.3,4" fill="#8c8c8c" stroke="#3c3c3c" stroke-width=".7"/><circle cx="-1.2" cy="1.3" r="3.4" fill="#9a9a9a" stroke="#2a2a2a" stroke-width=".6"/><text x="-1.2" y="3.9" font-family="Liberation Sans,sans-serif" font-size="7.5" font-weight="bold" text-anchor="middle" fill="#111">s</text></g><g transform="translate(329.00,363.50)"><rect x="-8" y="-8" width="16.5" height="16.5" fill="#c9c9c9"/><path d="M-7 3L-2 8H5L-1 3Z" fill="#505058" opacity=".55"/><polygon points="0.0,-7.0 6.7,-3.6 1.0,-0.7 -6.8,-3.5" fill="#c9a0e6"/><polygon points="-6.8,-3.5 1.0,-0.7 1.0,7.1 -6.1,3.5" fill="#9466b8"/><polygon points="1.0,-0.7 6.7,-3.6 6.3,3.0 1.0,7.1" fill="#e6ccf4"/><polygon points="0.0,-7.0 6.7,-3.6 6.3,3.0 1.0,7.1 -6.1,3.5 -6.8,-3.5" fill="none" stroke="#5a4070" stroke-width="1.1" stroke-linejoin="round"/><path d="M-6.8 -3.5L1 -0.7L6.7 -3.6M1 -0.7V7.1" stroke="#5a4070" stroke-width="1" fill="none"/></g><g transform="translate(352.00,363.50)"><path d="M-7 3L-2 8H5L-1 3Z" fill="#505058" opacity=".55"/><polygon points="0.0,-7.0 6.7,-3.6 1.0,-0.7 -6.8,-3.5" fill="#8ad8d0"/><polygon points="-6.8,-3.5 1.0,-0.7 1.0,7.1 -6.1,3.5" fill="#46a096"/><polygon points="1.0,-0.7 6.7,-3.6 6.3,3.0 1.0,7.1" fill="#a4e4dc"/><polygon points="0.0,-7.0 6.7,-3.6 6.3,3.0 1.0,7.1 -6.1,3.5 -6.8,-3.5" fill="none" stroke="#1f4f4c" stroke-width="1.1" stroke-linejoin="round"/><path d="M-6.8 -3.5L1 -0.7L6.7 -3.6M1 -0.7V7.1" stroke="#1f4f4c" stroke-width="1" fill="none"/><path d="M-3.4 -5.2L3.9 -2.2M3.4 -5.3L-2.9 -2.1M-6.4 0L1 3.2L6.5 -0.3M-2.9 -2.1V5.3M3.9 -2.2V5" stroke="#1f4f4c" stroke-width=".9" fill="none"/></g><g transform="translate(383.00,363.50)"><rect x="-8" y="-8" width="16" height="16" fill="#d2d2d2"/><text x="0" y="6" font-family="Liberation Sans,sans-serif" font-size="16.5" font-weight="bold" text-anchor="middle" fill="#000" transform="scale(.7,1)" stroke="#000" stroke-width="1.2">G</text></g><g transform="translate(413.50,363.50)"><path d="M-3.2 -1V-3.4A3.2 3.2 0 0 1 3.2 -3.4V-1" fill="none" stroke="#3f9fdc" stroke-width="2.5"/><rect x="-5.7" y="-1.6" width="11.2" height="9.4" rx="1" fill="#eda034" stroke="#c88420" stroke-width=".6"/><rect x="-4.8" y="-0.8" width="9.4" height="3" fill="#fad488" opacity=".85"/><rect x="-0.9" y="1.8" width="1.7" height="3.2" fill="#5a3a08"/></g><g transform="translate(436.50,363.50)"><path d="M-7.4 0.6C-4.5 -4.2 3.5 -4.4 7.6 0.8C4 4.4 -4 4 -7.4 0.6Z" fill="#f4f4f4" stroke="#0a0a0a" stroke-width="1.1"/><path d="M-7.6 0.4C-4.5 -5 3.8 -5 7.8 0.6C3.6 -2.6 -4 -2.6 -7.6 0.4Z" fill="#0a0a0a"/><circle cx="0" cy="0.5" r="2.5" fill="#0a0a0a"/><circle cx="-0.8" cy="-0.2" r=".7" fill="#ddd"/><path d="M3 3.4L7.4 1.4" stroke="#0a0a0a" stroke-width="1.2"/></g><g transform="translate(468.50,363.50)"><circle cx="-0.3" cy="-5.2" r="2.6" fill="#0c0c0c"/><path d="M-1.6 -3.5H1L1.8 1.5H-2.4Z" fill="#0c0c0c"/><path d="M-7.2 0.8L-2.5 -1.2H2.5L7.2 1.2V7H-7.2Z" fill="#0c0c0c"/><path d="M-5.6 1.4H-2.6V2.6H-5.6Z" fill="#aaa"/><path d="M-6 4.4H6" stroke="#555" stroke-width=".7"/></g><g transform="translate(491.50,363.50)"><path d="M-8 7A8 9 0 0 1 8 7Z" fill="#f06060" opacity=".85"/><circle cx="0" cy="-1" r="7" fill="#f47070" opacity=".55"/><circle cx="0.2" cy="-5" r="2.3" fill="#6a0808"/><path d="M-1.2 -3.5H1.4L2 1.2H-2Z" fill="#6a0808"/><path d="M-7.2 1L-2.5 -0.8H2.5L7.2 1.2V7H-7.2Z" fill="#8a0c0c"/><path d="M-5.6 1.6H-2.8V2.7H-5.6Z" fill="#f0b0b0"/><path d="M1.5 2L5 3.6" stroke="#e05050" stroke-width="1"/></g><g transform="translate(512.00,363.50)"><text x="2.6" y="6.6" font-family="Liberation Sans,sans-serif" font-size="14.5" text-anchor="middle" fill="#000" stroke="#000" stroke-width=".15">S</text><rect x="-6.4" y="1.4" width="1.1" height="5.4" fill="#c81818"/></g><g transform="translate(545.00,363.50)"><rect x="-6.4" y="-6.4" width="13" height="13.2" fill="#f6f8ff" stroke="#161a3a" stroke-width="1.2"/><rect x="-5.8" y="4.2" width="11.8" height="2" fill="#3a6ad8"/></g><g transform="translate(576.50,363.50)"><circle cx="0.6" cy="-5.8" r="2.2" fill="#666"/><rect x="-1" y="-5" width="3.2" height="2.4" fill="#444"/><rect x="-3.4" y="-3.4" width="10" height="9" fill="#fff"/><rect x="-2.4" y="-2.4" width="9" height="8" fill="#0a0a0a"/><path d="M-6.4 4.6H6.6V7.2H-6.4Z" fill="#3a3a3a"/><path d="M-2.4 5.6L6.6 -2.4V5.6Z" fill="#3c3c3c"/></g><g transform="translate(607.00,363.50)"><rect x="-0.6" y="-6.6" width="7.2" height="7" fill="#fff" stroke="#1a1a1a" stroke-width="1.2"/><rect x="-0.6" y="-6.6" width="7.2" height="1.8" fill="#1a1a1a"/><rect x="-6.6" y="0.2" width="6.4" height="6.2" fill="#f4f4f8" stroke="#555a66" stroke-width="1"/><path d="M-4.6 4.4L2.6 -2.6M-1.4 -2.9H3V1.4" stroke="#0a0a0a" stroke-width="2" fill="none"/></g><g transform="translate(629.50,363.50)"><rect x="-5.2" y="-5.6" width="10.6" height="11.4" fill="#fdfdff" stroke="#0a0a0a" stroke-width="1.5"/><rect x="-5.9" y="-6.4" width="12" height="2.9" fill="#0a0a0a"/></g><path d="M1096.7 361.2h9.6l-4.8 5.2Z" fill="#000"/><path d="M1116.5 355.0V371.6" stroke="#7d7f8a" stroke-width="1"/><path d="M1147.5 355.0V371.6" stroke="#7d7f8a" stroke-width="1"/><path d="M1385.5 355.0V371.6" stroke="#7d7f8a" stroke-width="1"/><path d="M1416.5 355.0V371.6" stroke="#7d7f8a" stroke-width="1"/><path d="M1470.5 355.0V371.6" stroke="#7d7f8a" stroke-width="1"/><path d="M1547.5 355.0V371.6" stroke="#7d7f8a" stroke-width="1"/><path d="M1578.5 355.0V371.6" stroke="#7d7f8a" stroke-width="1"/><path d="M1609.5 355.0V371.6" stroke="#7d7f8a" stroke-width="1"/><rect x="1153.0" y="354.2" width="22.0" height="18.5" rx="3.2" fill="#cfd2de" stroke="#6a6c76" stroke-width="1"/><rect x="1154.0" y="355.2" width="20.0" height="16.5" rx="2.4" fill="none" stroke="#eceef4" stroke-width="1" opacity=".35"/><g transform="translate(1133.00,363.90)"><g transform="scale(1.00)"><circle cx="0" cy="-5.3" r="2.5" fill="#4a4e57"/><rect x="-0.8" y="-4" width="1.6" height="6" fill="#4a4e57"/><path d="M-7 2.2H7V6.6H3.4V5.2H-3.4V6.6H-7Z" fill="#4a4e57"/><rect x="-4.6" y="0.7" width="2" height="1.5" fill="#4a4e57" opacity=".7"/></g></g><g transform="translate(1164.00,363.50)"><polygon points="0.0,-7.0 6.7,-3.6 6.3,3.0 1.0,7.1 -6.1,3.5 -6.8,-3.5" fill="none" stroke="#33343b" stroke-width="1.2" stroke-linejoin="round"/><path d="M-6.8 -3.5L1 -0.7L6.7 -3.6M1 -0.7V7.1" stroke="#33343b" stroke-width="1.2" fill="none"/></g><g transform="translate(1187.00,363.50)"><path d="M0 -7V0.6L-6.1 3.5M0 0.6L6.3 3" stroke="#9a9aa0" stroke-width="1" fill="none"/><polygon points="0.0,-7.0 6.7,-3.6 6.3,3.0 1.0,7.1 -6.1,3.5 -6.8,-3.5" fill="none" stroke="#33343b" stroke-width="1.2" stroke-linejoin="round"/><path d="M-6.8 -3.5L1 -0.7L6.7 -3.6M1 -0.7V7.1" stroke="#33343b" stroke-width="1.2" fill="none"/></g><g transform="translate(1210.00,363.50)"><polygon points="0.0,-7.0 6.7,-3.6 6.3,3.0 1.0,7.1 -6.1,3.5 -6.8,-3.5" fill="url(#gLit)" stroke="#2f8c8c" stroke-width="1.3" stroke-linejoin="round"/><path d="M-5.5 -3L1 -0.5L5.8 -3.2" stroke="#e8ffff" stroke-width="1" fill="none" opacity=".8"/></g><g transform="translate(1233.00,363.50)"><path d="M-7 3L-2 8H5L-1 3Z" fill="#505058" opacity=".55"/><polygon points="0.0,-7.0 6.7,-3.6 1.0,-0.7 -6.8,-3.5" fill="#79d9d0"/><polygon points="-6.8,-3.5 1.0,-0.7 1.0,7.1 -6.1,3.5" fill="#38a59c"/><polygon points="1.0,-0.7 6.7,-3.6 6.3,3.0 1.0,7.1" fill="#b3eee8"/><polygon points="0.0,-7.0 6.7,-3.6 6.3,3.0 1.0,7.1 -6.1,3.5 -6.8,-3.5" fill="none" stroke="#173f3f" stroke-width="1.1" stroke-linejoin="round"/><path d="M-6.8 -3.5L1 -0.7L6.7 -3.6M1 -0.7V7.1" stroke="#173f3f" stroke-width="1" fill="none"/></g><g transform="translate(1256.00,363.50)"><path d="M-7 3L-2 8H5L-1 3Z" fill="#505058" opacity=".55"/><polygon points="0.0,-7.0 6.7,-3.6 1.0,-0.7 -6.8,-3.5" fill="#6fd2c9"/><polygon points="-6.8,-3.5 1.0,-0.7 1.0,7.1 -6.1,3.5" fill="#2f9389"/><polygon points="1.0,-0.7 6.7,-3.6 6.3,3.0 1.0,7.1" fill="#9be6de"/><polygon points="0.0,-7.0 6.7,-3.6 6.3,3.0 1.0,7.1 -6.1,3.5 -6.8,-3.5" fill="none" stroke="#2a6a66" stroke-width="1.1" stroke-linejoin="round"/><path d="M-6.8 -3.5L1 -0.7L6.7 -3.6M1 -0.7V7.1" stroke="#2a6a66" stroke-width="1" fill="none"/></g><g transform="translate(1279.00,363.50)"><polygon points="-1.4,-6.5 6.6,-3.5 6.6,7 -1.4,3.5" fill="#2f8f86" stroke="#1f5a58" stroke-width=".8"/><polygon points="-3.8,-6.5 4.2,-3.5 4.2,7 -3.8,3.5" fill="#4fb5ab" stroke="#1f5a58" stroke-width=".8"/><polygon points="-6.4,-6.5 1.6,-3.5 1.6,7 -6.4,3.5" fill="#a8ece4" stroke="#1f5a58" stroke-width=".8"/></g><g transform="translate(1302.00,363.50)"><path d="M-7 3L-2 8H5L-1 3Z" fill="#505058" opacity=".55"/><polygon points="0.0,-7.0 6.7,-3.6 1.0,-0.7 -6.8,-3.5" fill="#cdb0aa"/><polygon points="-6.8,-3.5 1.0,-0.7 1.0,7.1 -6.1,3.5" fill="#8c6a64"/><polygon points="1.0,-0.7 6.7,-3.6 6.3,3.0 1.0,7.1" fill="#ecd6d0"/><polygon points="0.0,-7.0 6.7,-3.6 6.3,3.0 1.0,7.1 -6.1,3.5 -6.8,-3.5" fill="none" stroke="#3a2a28" stroke-width="1.1" stroke-linejoin="round"/><path d="M-6.8 -3.5L1 -0.7L6.7 -3.6M1 -0.7V7.1" stroke="#3a2a28" stroke-width="1" fill="none"/></g><g transform="translate(1325.00,363.50)"><polygon points="-1.3,-6 6.7,-4 6.7,6.5 -1.3,4" fill="#5c5c5c" stroke="#3c3c3c" stroke-width=".7"/><polygon points="-3.7,-6 4.3,-4 4.3,6.5 -3.7,4" fill="#747474" stroke="#3c3c3c" stroke-width=".7"/><polygon points="-6.3,-6 1.7,-4 1.7,6.5 -6.3,4" fill="#8c8c8c" stroke="#3c3c3c" stroke-width=".7"/><circle cx="-1.2" cy="1.3" r="3.4" fill="#9a9a9a" stroke="#2a2a2a" stroke-width=".6"/><text x="-1.2" y="3.9" font-family="Liberation Sans,sans-serif" font-size="7.5" font-weight="bold" text-anchor="middle" fill="#111">s</text></g><g transform="translate(1348.00,363.50)"><rect x="-8" y="-8" width="16.5" height="16.5" fill="#c9c9c9"/><path d="M-7 3L-2 8H5L-1 3Z" fill="#505058" opacity=".55"/><polygon points="0.0,-7.0 6.7,-3.6 1.0,-0.7 -6.8,-3.5" fill="#c9a0e6"/><polygon points="-6.8,-3.5 1.0,-0.7 1.0,7.1 -6.1,3.5" fill="#9466b8"/><polygon points="1.0,-0.7 6.7,-3.6 6.3,3.0 1.0,7.1" fill="#e6ccf4"/><polygon points="0.0,-7.0 6.7,-3.6 6.3,3.0 1.0,7.1 -6.1,3.5 -6.8,-3.5" fill="none" stroke="#5a4070" stroke-width="1.1" stroke-linejoin="round"/><path d="M-6.8 -3.5L1 -0.7L6.7 -3.6M1 -0.7V7.1" stroke="#5a4070" stroke-width="1" fill="none"/></g><g transform="translate(1371.00,363.50)"><path d="M-7 3L-2 8H5L-1 3Z" fill="#505058" opacity=".55"/><polygon points="0.0,-7.0 6.7,-3.6 1.0,-0.7 -6.8,-3.5" fill="#8ad8d0"/><polygon points="-6.8,-3.5 1.0,-0.7 1.0,7.1 -6.1,3.5" fill="#46a096"/><polygon points="1.0,-0.7 6.7,-3.6 6.3,3.0 1.0,7.1" fill="#a4e4dc"/><polygon points="0.0,-7.0 6.7,-3.6 6.3,3.0 1.0,7.1 -6.1,3.5 -6.8,-3.5" fill="none" stroke="#1f4f4c" stroke-width="1.1" stroke-linejoin="round"/><path d="M-6.8 -3.5L1 -0.7L6.7 -3.6M1 -0.7V7.1" stroke="#1f4f4c" stroke-width="1" fill="none"/><path d="M-3.4 -5.2L3.9 -2.2M3.4 -5.3L-2.9 -2.1M-6.4 0L1 3.2L6.5 -0.3M-2.9 -2.1V5.3M3.9 -2.2V5" stroke="#1f4f4c" stroke-width=".9" fill="none"/></g><g transform="translate(1402.00,363.50)"><rect x="-8" y="-8" width="16" height="16" fill="#d2d2d2"/><text x="0" y="6" font-family="Liberation Sans,sans-serif" font-size="16.5" font-weight="bold" text-anchor="middle" fill="#000" transform="scale(.7,1)" stroke="#000" stroke-width="1.2">G</text></g><g transform="translate(1432.50,363.50)"><path d="M-3.2 -1V-3.4A3.2 3.2 0 0 1 3.2 -3.4V-1" fill="none" stroke="#3f9fdc" stroke-width="2.5"/><rect x="-5.7" y="-1.6" width="11.2" height="9.4" rx="1" fill="#eda034" stroke="#c88420" stroke-width=".6"/><rect x="-4.8" y="-0.8" width="9.4" height="3" fill="#fad488" opacity=".85"/><rect x="-0.9" y="1.8" width="1.7" height="3.2" fill="#5a3a08"/></g><g transform="translate(1455.50,363.50)"><path d="M-7.4 0.6C-4.5 -4.2 3.5 -4.4 7.6 0.8C4 4.4 -4 4 -7.4 0.6Z" fill="#f4f4f4" stroke="#0a0a0a" stroke-width="1.1"/><path d="M-7.6 0.4C-4.5 -5 3.8 -5 7.8 0.6C3.6 -2.6 -4 -2.6 -7.6 0.4Z" fill="#0a0a0a"/><circle cx="0" cy="0.5" r="2.5" fill="#0a0a0a"/><circle cx="-0.8" cy="-0.2" r=".7" fill="#ddd"/><path d="M3 3.4L7.4 1.4" stroke="#0a0a0a" stroke-width="1.2"/></g><g transform="translate(1487.50,363.50)"><circle cx="-0.3" cy="-5.2" r="2.6" fill="#0c0c0c"/><path d="M-1.6 -3.5H1L1.8 1.5H-2.4Z" fill="#0c0c0c"/><path d="M-7.2 0.8L-2.5 -1.2H2.5L7.2 1.2V7H-7.2Z" fill="#0c0c0c"/><path d="M-5.6 1.4H-2.6V2.6H-5.6Z" fill="#aaa"/><path d="M-6 4.4H6" stroke="#555" stroke-width=".7"/></g><g transform="translate(1510.50,363.50)"><path d="M-8 7A8 9 0 0 1 8 7Z" fill="#f06060" opacity=".85"/><circle cx="0" cy="-1" r="7" fill="#f47070" opacity=".55"/><circle cx="0.2" cy="-5" r="2.3" fill="#6a0808"/><path d="M-1.2 -3.5H1.4L2 1.2H-2Z" fill="#6a0808"/><path d="M-7.2 1L-2.5 -0.8H2.5L7.2 1.2V7H-7.2Z" fill="#8a0c0c"/><path d="M-5.6 1.6H-2.8V2.7H-5.6Z" fill="#f0b0b0"/><path d="M1.5 2L5 3.6" stroke="#e05050" stroke-width="1"/></g><g transform="translate(1531.00,363.50)"><text x="2.6" y="6.6" font-family="Liberation Sans,sans-serif" font-size="14.5" text-anchor="middle" fill="#000" stroke="#000" stroke-width=".15">S</text><rect x="-6.4" y="1.4" width="1.1" height="5.4" fill="#c81818"/></g><g transform="translate(1564.00,363.50)"><rect x="-6.4" y="-6.4" width="13" height="13.2" fill="#f6f8ff" stroke="#161a3a" stroke-width="1.2"/><rect x="-5.8" y="4.2" width="11.8" height="2" fill="#3a6ad8"/></g><g transform="translate(1595.50,363.50)"><circle cx="0.6" cy="-5.8" r="2.2" fill="#666"/><rect x="-1" y="-5" width="3.2" height="2.4" fill="#444"/><rect x="-3.4" y="-3.4" width="10" height="9" fill="#fff"/><rect x="-2.4" y="-2.4" width="9" height="8" fill="#0a0a0a"/><path d="M-6.4 4.6H6.6V7.2H-6.4Z" fill="#3a3a3a"/><path d="M-2.4 5.6L6.6 -2.4V5.6Z" fill="#3c3c3c"/></g><g transform="translate(1626.00,363.50)"><rect x="-0.6" y="-6.6" width="7.2" height="7" fill="#fff" stroke="#1a1a1a" stroke-width="1.2"/><rect x="-0.6" y="-6.6" width="7.2" height="1.8" fill="#1a1a1a"/><rect x="-6.6" y="0.2" width="6.4" height="6.2" fill="#f4f4f8" stroke="#555a66" stroke-width="1"/><path d="M-4.6 4.4L2.6 -2.6M-1.4 -2.9H3V1.4" stroke="#0a0a0a" stroke-width="2" fill="none"/></g><g transform="translate(1648.50,363.50)"><rect x="-5.2" y="-5.6" width="10.6" height="11.4" fill="#fdfdff" stroke="#0a0a0a" stroke-width="1.5"/><rect x="-5.9" y="-6.4" width="12" height="2.9" fill="#0a0a0a"/></g><g transform="translate(1.5,91)"><svg x="1" y="1" width="32" height="32" viewBox="1 1 32 32" overflow="hidden"><path d="M3.5 10.5V7.5H11L13 10.5Z" fill="#8cc8bc" stroke="#143c38" stroke-width="1"/><rect x="3.6" y="10.4" width="20.4" height="15" rx="1" fill="url(#gTv)" stroke="#143c38" stroke-width="1.3"/><rect x="6.5" y="16.8" width="15" height="5.6" fill="#6cb4a8" stroke="#2a6a62" stroke-width=".7"/><rect x="10.6" y="12.4" width="7.6" height="1.8" fill="#0c1c1a"/><path d="M24 14.5L29.4 12V24.6L24 22Z" fill="url(#gTh)" stroke="#143c38" stroke-width="1.1"/></svg></g><g transform="translate(37.5,91)"><svg x="1" y="1" width="32" height="32" viewBox="1 1 32 32" overflow="hidden"><polygon points="17,6 26,11.5 26,22 17,27.5 8,22 8,11.5" fill="#bce8e4" stroke="#143c3c" stroke-width="1.6" stroke-linejoin="round"/><path d="M8 11.5L17 16.5L26 11.5M17 16.5V27.5" stroke="#143c3c" stroke-width="1.1" fill="none"/><path d="M17 6V16M8 22L17 16L26 22" stroke="#6cb8b4" stroke-width=".9" fill="none"/></svg></g><g transform="translate(1.5,127)"><svg x="1" y="1" width="32" height="32" viewBox="1 1 32 32" overflow="hidden"><g filter="url(#bl1)"><path d="M3 24.5L11 14.5L13.5 17L18 7.5L23.5 16L29.5 23.5Q16 27 3 24.5Z" fill="#3a3a3a"/><path d="M18 7.5L15.4 13.4L17.6 12L19.4 14.6L21 12.2Z" fill="#f4f8f8"/><path d="M8 22L12.5 16.5L14 21M20 15L24 22" stroke="#8a8a8a" stroke-width="1.3" fill="none"/></g></svg></g><g transform="translate(37.5,127)"><svg x="1" y="1" width="32" height="32" viewBox="1 1 32 32" overflow="hidden"><g transform="translate(16.8,16.6)"><g transform="rotate(0)"><path d="M0 -13.5L4.4 -9H2V-5.6H-2V-9H-4.4Z" fill="#8cc8ba" stroke="#143c38" stroke-width=".9"/></g><g transform="rotate(90)"><path d="M0 -13.5L4.4 -9H2V-5.6H-2V-9H-4.4Z" fill="#8cc8ba" stroke="#143c38" stroke-width=".9"/></g><g transform="rotate(180)"><path d="M0 -13.5L4.4 -9H2V-5.6H-2V-9H-4.4Z" fill="#8cc8ba" stroke="#143c38" stroke-width=".9"/></g><g transform="rotate(270)"><path d="M0 -13.5L4.4 -9H2V-5.6H-2V-9H-4.4Z" fill="#8cc8ba" stroke="#143c38" stroke-width=".9"/></g><text x="0" y="4.6" font-family="Liberation Serif,serif" font-size="13.5" font-weight="bold" text-anchor="middle" fill="#000" stroke="#000" stroke-width=".5">T</text></g></svg></g><g transform="translate(1.5,163)"><svg x="1" y="1" width="32" height="32" viewBox="1 1 32 32" overflow="hidden"><path d="M1.5 2.8H18.5L2.2 21.5Z" fill="none" stroke="#3a9a8a" stroke-width="1.5"/><path d="M3.4 4.4H15L3.8 17.4Z" fill="#e4eeec" opacity=".6"/><path d="M7 6.5L11 5L33 31.5V33H22Z" fill="url(#gMet)" stroke="#111" stroke-width=".8"/><ellipse cx="9.6" cy="9.6" rx="2.6" ry="4" transform="rotate(-25 9.6 9.6)" fill="none" stroke="#8a5a40" stroke-width="1.4"/><path d="M13 12L31 33H33V31.5Z" fill="#161616"/></svg></g><g transform="translate(37.5,163)"><svg x="1" y="1" width="32" height="32" viewBox="1 1 32 32" overflow="hidden"><path d="M4.6 6L9 4.4L26.6 7.4L25.6 24L21 29L16.8 27.6L17.4 16Q15 10.5 12.4 14.4L11.4 24.6L7 26Z" fill="#4a84d4" stroke="#1c3a78" stroke-width="1"/><path d="M21 29L21.8 13.4Q19.5 6.5 12.4 9.6L9 4.4L26.6 7.4L25.6 24Z" fill="#2c5cb0" opacity=".75"/><path d="M5.6 7L9 5.6L14 7.4L8.6 9Z" fill="#8ab8f0" opacity=".8"/></svg></g><g transform="translate(1.5,223)"><svg x="1" y="1" width="32" height="32" viewBox="1 1 32 32" overflow="hidden"><path d="M6.5 23L19.5 30L27.5 21.5" stroke="#555" stroke-width="2" fill="none" opacity=".4" filter="url(#bl1)"/><polygon points="3.8,10 13.8,3.8 27.1,7.6 19,12.9" fill="#b4f0e6"/><polygon points="3.8,10 19,12.9 18.6,28.6 5.7,21.9" fill="url(#gTv)"/><polygon points="19,12.9 27.1,7.6 26.2,20.5 18.6,28.6" fill="#8ee0d4"/><polygon points="3.8,10 13.8,3.8 27.1,7.6 26.2,20.5 18.6,28.6 5.7,21.9" fill="none" stroke="#143c38" stroke-width="1.3" stroke-linejoin="round"/><path d="M3.8 10L19 12.9L27.1 7.6M19 12.9L18.6 28.6" stroke="#3a8a80" stroke-width=".8" fill="none"/></svg></g><g transform="translate(37.5,223)"><svg x="1" y="1" width="32" height="32" viewBox="1 1 32 32" overflow="hidden"><path d="M16.2 3.3L26.4 23.5Q26 29.4 16 29.4Q6 29.4 5.8 23.5Z" fill="url(#gTh)" stroke="#143c38" stroke-width="1.2" stroke-linejoin="round"/><path d="M16.4 5L20.5 26" stroke="#d8fff8" stroke-width="2.4" opacity=".5" filter="url(#bl1)"/></svg></g><g transform="translate(1.5,259)"><svg x="1" y="1" width="32" height="32" viewBox="1 1 32 32" overflow="hidden"><path d="M4.6 8.6L8 5.6L12.6 6.4L14 9.6L19 10.6L20.6 14L25.6 16.6L26.4 20L29.6 22.6V25.4L16.6 26.6L13.6 23.6L7.6 21.6L5.2 16Z" fill="url(#gTv)" stroke="#143c38" stroke-width="1.2" stroke-linejoin="round"/><path d="M5.4 9L9 12L13.6 10M11 14.4L15.6 16.2L20 14.4M14.6 19.6L21 21L26 20M16.6 24L28.6 23" stroke="#1c5a54" stroke-width=".9" fill="none"/><path d="M6 9.4L9 12.4L8.6 21L6 16Z" fill="#1f5c56"/><path d="M9.4 7L12 7.4L13 9.4L9.6 11Z M15 11.6L18.4 11.8L19.6 14L15.8 15.4Z M20 17L25 17.4L25.6 19.6L21 20.2Z" fill="#d4fff8"/></svg></g><g transform="translate(37.5,259)"><svg x="1" y="1" width="32" height="32" viewBox="1 1 32 32" overflow="hidden"><path d="M5.6 8.6V23Q6 28.6 16.4 28.6Q26.6 28.6 27 23V8.6Z" fill="url(#gTh)" stroke="#143c38" stroke-width="1.2"/><ellipse cx="16.3" cy="8.6" rx="10.7" ry="4.6" fill="#a4ece0" stroke="#143c38" stroke-width="1.2"/></svg></g><g transform="translate(1.5,295)"><svg x="1" y="1" width="32" height="32" viewBox="1 1 32 32" overflow="hidden"><path d="M3.4 9.6L15.6 4.6L22.4 6.4L22 11.6L25.6 12.6L25.2 17L29 18.4L28.4 24.4L20.4 28.4L5.4 22Z" fill="url(#gTv)" stroke="#143c38" stroke-width="1.3" stroke-linejoin="round"/><path d="M3.4 9.6L13.4 12.6L22.4 6.4M13.4 12.6L13.8 16L22 11.6M13.8 16L16.6 17L17 21L25.2 17M17 21L20.4 22L20.4 28.4M20.4 22L29 18.4" stroke="#1c5a54" stroke-width=".9" fill="none"/><path d="M3.4 9.6L13.4 12.6L13.8 16L16.6 17L17 21L20.4 22V28.4L5.4 22Z" fill="#3c948a" opacity=".85"/><path d="M5 9.6L15.6 5.6L20.6 6.8L13.4 11.4Z M15 15.2L21.6 12L24.4 13L17 16.4Z M18.4 20.4L25 17.6L27.6 18.6L20.6 21.2Z" fill="#c8fbf2"/></svg></g><g transform="translate(37.5,295)"><svg x="1" y="1" width="32" height="32" viewBox="1 1 32 32" overflow="hidden"><polygon points="2.6,15.6 14.6,8.4 29,13 18.6,23.6" fill="url(#gT)" stroke="#143c38" stroke-width="1.3" stroke-linejoin="round"/><path d="M4 16.6L18.6 24.8L29.6 13.8" stroke="#333" stroke-width="1.2" fill="none" opacity=".5"/></svg></g><g transform="translate(1.5,331)"><svg x="1" y="1" width="32" height="32" viewBox="1 1 32 32" overflow="hidden"><path d="M3.4 8L7.4 5L12.6 5.6L14 8.6L19.4 10L20.6 13L26.6 16L27 19.6L30 22.6L29.4 25.6L16 27.6L11 24Q6 17 3.4 8Z" fill="url(#gTv)" stroke="#143c38" stroke-width="1.2" stroke-linejoin="round"/><path d="M4.6 9L9 11L13.6 9M8 14L14 15.6L20 13.4M11 19.6L20 20.6L26.6 19M14.6 24.6L29 23.6" stroke="#1c5a54" stroke-width=".9" fill="none"/><path d="M8.6 6.4L12 6.6L13 8.4L9 10Z M14.6 11L18.6 11L19.6 13L14.6 14.6Z M20.4 16.4L25.6 16.8L26 18.6L20 19.6Z" fill="#d4fff8"/><path d="M14.6 21.6L20.6 22L20.4 20.8L14.4 20.4Z" fill="#1f5c56"/></svg></g><g transform="translate(37.5,331)"><svg x="1" y="1" width="32" height="32" viewBox="1 1 32 32" overflow="hidden"><circle cx="16.6" cy="16.6" r="11.6" fill="url(#gSph)" stroke="#0f302c" stroke-width="1.2"/></svg></g><g transform="translate(1.5,367)"><svg x="1" y="1" width="32" height="32" viewBox="1 1 32 32" overflow="hidden"><polygon points="8.4,10.4 16.6,6 16.6,26 8.4,30" fill="#5cb0a6" stroke="#0f2c2a" stroke-width="1"/><polygon points="16.6,6 24.6,10.4 24.6,30 16.6,26" fill="#7cc8be" stroke="#0f2c2a" stroke-width="1"/><polygon points="10.4,4.4 22.6,9.6 22.6,23.4 10.4,28.6" fill="#b8f0ea" opacity=".75" stroke="#0f2c2a" stroke-width="1"/><polygon points="22.6,4.4 10.4,9.6 10.4,23.4 22.6,28.6" fill="#9ee0d8" opacity=".6" stroke="#0f2c2a" stroke-width="1"/><path d="M16.6 6V26" stroke="#0f2c2a" stroke-width="1.1"/></svg></g><g transform="translate(1.5,427)"><svg x="1" y="1" width="32" height="32" viewBox="1 1 32 32" overflow="hidden"><rect x="5.4" y="14" width="14.6" height="14.6" fill="#000" opacity=".35" filter="url(#bl1)"/><rect x="13.4" y="5.8" width="14.6" height="14.6" fill="#000" opacity=".3" filter="url(#bl1)"/><rect x="4" y="12.6" width="14.6" height="14.6" fill="url(#gTe)" stroke="#080808" stroke-width="1.5"/><rect x="12" y="4.4" width="14.6" height="14.6" fill="url(#gB)" stroke="#d81c28" stroke-width="1.5"/><rect x="12.8" y="13.4" width="5" height="5" fill="#3f8a9c" opacity=".85"/></svg></g><g transform="translate(37.5,427)"><svg x="1" y="1" width="32" height="32" viewBox="1 1 32 32" overflow="hidden"><rect x="5.4" y="14" width="14.6" height="14.6" fill="#000" opacity=".35" filter="url(#bl1)"/><rect x="13.4" y="5.8" width="14.6" height="14.6" fill="#000" opacity=".3" filter="url(#bl1)"/><rect x="4" y="12.6" width="14.6" height="14.6" fill="url(#gTe)" stroke="#080808" stroke-width="1.5"/><rect x="12" y="4.4" width="14.6" height="14.6" fill="url(#gB)" stroke="#080808" stroke-width="1.5"/><path d="M12.4 12.6V18.8H18.6" stroke="#d81c28" stroke-width="1.7" fill="none"/></svg></g><g transform="translate(1.5,463)"><svg x="1" y="1" width="32" height="32" viewBox="1 1 32 32" overflow="hidden"><rect x="5.4" y="14" width="14.6" height="14.6" fill="#000" opacity=".35" filter="url(#bl1)"/><rect x="13.4" y="5.8" width="14.6" height="14.6" fill="#000" opacity=".3" filter="url(#bl1)"/><rect x="12" y="4.4" width="14.6" height="14.6" fill="url(#gB)" stroke="#080808" stroke-width="1.5" stroke-dasharray="2 1.3"/><rect x="4" y="12.6" width="14.6" height="14.6" fill="url(#gTe)" stroke="#080808" stroke-width="1.5" stroke-dasharray="2 1.3"/><rect x="12.2" y="12.6" width="6.4" height="6.4" fill="#2a6cb8" stroke="#d81c28" stroke-width="1.6"/></svg></g><g transform="translate(37.5,463)"><svg x="1" y="1" width="32" height="32" viewBox="1 1 32 32" overflow="hidden"><rect x="5.4" y="14" width="14.6" height="14.6" fill="#000" opacity=".35" filter="url(#bl1)"/><rect x="13.4" y="5.8" width="14.6" height="14.6" fill="#000" opacity=".3" filter="url(#bl1)"/><rect x="4" y="12.6" width="14.6" height="14.6" fill="url(#gTe)" stroke="#080808" stroke-width="1.5" stroke-dasharray="2 1.3"/><rect x="12" y="4.4" width="14.6" height="14.6" fill="url(#gB)" stroke="#d81c28" stroke-width="1.5"/><path d="M12.2 12.6H18.6V19" stroke="#d81c28" stroke-width="1.7" fill="none"/><path d="M12.8 13.2H18V18.4H12.8Z" fill="#6aa89c"/></svg></g><g transform="translate(1.5,523)"><svg x="1" y="1" width="32" height="32" viewBox="1 1 32 32" overflow="hidden"><rect x="4.4" y="5.4" width="23" height="23" fill="#000" opacity=".4" filter="url(#bl1)"/><rect x="3.4" y="4.4" width="23" height="23" fill="url(#gB2)" stroke="#06080c" stroke-width="1.5"/><rect x="8.4" y="9.4" width="13" height="13" fill="none" stroke="#0a1c44" stroke-width="1.4" stroke-dasharray="2.2 1.4"/></svg></g><g transform="translate(37.5,523)"><svg x="1" y="1" width="32" height="32" viewBox="1 1 32 32" overflow="hidden"><polygon points="4.4,11 14,4.4 27,8.4 26,21.6 17.6,29 6,22.6" fill="#6c9cd8" stroke="#1c2c4c" stroke-width="1.4" stroke-linejoin="round"/><polygon points="4.4,11 14,4.4 27,8.4 18.6,13.4" fill="#a8c8f0" opacity=".9"/><polygon points="18.6,13.4 27,8.4 26,21.6 17.6,29" fill="#8cb4e8" opacity=".9"/><polygon points="9.6,19 17.6,16 23.6,18.6 17.6,27.6" fill="#3c5c94" opacity=".8"/><path d="M4.4 11L18.6 13.4L27 8.4M18.6 13.4L17.6 29M14 4.4L13.4 16.6L6 22.6M13.4 16.6L26 21.6" stroke="#2c4478" stroke-width=".8" fill="none" opacity=".8"/></svg></g><g transform="translate(1.5,583)"><svg x="1" y="1" width="32" height="32" viewBox="1 1 32 32" overflow="hidden"><g><path d="M3.4 10C6 3.6 18 3 22.4 9.4C19 16 7 16.4 3.4 10Z" fill="#5c6c6a" stroke="#2a3432" stroke-width=".8"/><path d="M6.4 10C9 6 17 6 19.6 9.6C17 13.6 9 13.6 6.4 10Z" fill="#f2f6f6"/><circle cx="13" cy="9.8" r="3" fill="#242c2c"/><circle cx="12" cy="8.8" r=".9" fill="#fff"/><path d="M4.4 8.4C8 4.4 17 4 21.4 8" stroke="#1c2424" stroke-width="1.2" fill="none"/></g><path d="M25.0 10V26.4H8.6V18" stroke="#000" stroke-width="2.2" fill="none" stroke-dasharray="2.6 1.2" opacity=".3" transform="translate(1,1)"/><path d="M25.0 9.6V26.4H8.6V18" stroke="#e0141c" stroke-width="2.4" fill="none" stroke-dasharray="2.6 1.2"/></svg></g><g transform="translate(37.5,583)"><svg x="1" y="1" width="32" height="32" viewBox="1 1 32 32" overflow="hidden"><g><path d="M3.4 10C6 3.6 18 3 22.4 9.4C19 16 7 16.4 3.4 10Z" fill="#5c6c6a" stroke="#2a3432" stroke-width=".8"/><path d="M4.4 9.6C9 11.6 17 11.6 21.6 9.4" stroke="#141c1c" stroke-width="1.5" fill="none"/><path d="M5 7.6C9 4.6 17 4.4 21 7.4" stroke="#9cb0ae" stroke-width="1.2" fill="none"/></g><path d="M25.0 10V26.4H8.6V18" stroke="#000" stroke-width="2.2" fill="none" stroke-dasharray="2.6 1.2" opacity=".3" transform="translate(1,1)"/><path d="M25.0 9.6V26.4H8.6V18" stroke="#e0141c" stroke-width="2.4" fill="none" stroke-dasharray="2.6 1.2"/></svg></g><g transform="translate(1.5,619)"><svg x="1" y="1" width="32" height="32" viewBox="1 1 32 32" overflow="hidden"><rect x="5.6" y="7.6" width="21" height="20.6" fill="#000" opacity=".4" filter="url(#bl1)"/><rect x="4.6" y="6.6" width="21" height="20.6" fill="#101414"/><polygon points="4.6,6.6 25.6,27.2 4.6,27.2" fill="url(#gTe)"/><rect x="4.6" y="6.6" width="21" height="20.6" fill="none" stroke="#060808" stroke-width="1.3"/><rect x="17.6" y="9.6" width="4.6" height="4.4" fill="#2c5c56" stroke="#5c9c92" stroke-width=".9"/><rect x="8" y="19.6" width="4.6" height="4.4" fill="#7cbcb0" stroke="#101c1a" stroke-width="1"/></svg></g><g transform="translate(37.5,619)"><svg x="1" y="1" width="32" height="32" viewBox="1 1 32 32" overflow="hidden"><g transform="translate(1,1)" opacity=".55"><path d="M3.4 10C6 3.6 18 3 22.4 9.4C19 16 7 16.4 3.4 10Z" fill="#5c6c6a" stroke="#2a3432" stroke-width=".8"/><path d="M6.4 10C9 6 17 6 19.6 9.6C17 13.6 9 13.6 6.4 10Z" fill="#f2f6f6"/><circle cx="13" cy="9.8" r="3" fill="#242c2c"/><circle cx="12" cy="8.8" r=".9" fill="#fff"/><path d="M4.4 8.4C8 4.4 17 4 21.4 8" stroke="#1c2424" stroke-width="1.2" fill="none"/></g><text x="20.4" y="29.4" font-family="Liberation Sans,sans-serif" font-size="25" font-weight="bold" text-anchor="middle" fill="#000" opacity=".45" transform="translate(1.2,1.2)">x</text><text x="20.4" y="29.4" font-family="Liberation Sans,sans-serif" font-size="25" font-weight="bold" text-anchor="middle" fill="#a8d4cc" stroke="#0c2420" stroke-width="1">x</text></svg></g>
</svg>
<div class="abs" style="left:293px;top:46px;width:58px;height:19px;border:1px solid #8b8b8b;border-bottom-color:#a8a8a8;border-radius:3px 3px 1px 1px;background:linear-gradient(180deg,#fcfcfc,#efefef 55%,#dedede)"></div>
<div class="t" id="local" style="left:297px;top:51px;font-size:12px;transform:scaleX(.76);transform-origin:0 0">ローカル</div>
<div class="abs" style="left:341px;top:56px;border-left:3.5px solid transparent;border-right:3.5px solid transparent;border-top:4px solid #000"></div>
<div class="abs" style="left:0;top:1026px;width:1680px;height:1px;background:#979797"></div>
<div class="abs" style="left:0;top:1027px;width:1680px;height:23px;background:#f0eded"></div>
<div class="abs" style="left:0;top:1027px;width:349px;height:23px;background:#fff"></div>
<div class="abs" style="left:0;top:1027px;width:1680px;height:1px;background:#fbfbfb"></div>
<div class="abs" style="left:349px;top:1028px;width:2px;height:21px;background:#f6f6f6"></div><div class="abs" style="left:351px;top:1028px;width:1px;height:21px;background:#d2d2d2"></div>
<div class="abs" style="left:2px;top:1030px;width:344px;height:20px;border:1px solid #c8c8c8;border-top-color:#a4a4a4;border-right-color:#dadada;background:#fff"></div>
<div class="abs" style="left:337px;top:1040px;border-left:3.5px solid transparent;border-right:3.5px solid transparent;border-top:4px solid #000"></div>
<div class="sbx" style="left:1107px"></div>
<div class="t nashi" style="left:1110px;top:1031px;transform:scaleX(.8);transform-origin:0 0">なし</div>
<div class="sbx" style="left:1169px"></div>
<div class="t nashi" style="left:1172px;top:1031px;transform:scaleX(.8);transform-origin:0 0">なし</div>
<div class="sbx" style="left:1231px"></div>
<div class="t nashi" style="left:1234px;top:1031px;transform:scaleX(.8);transform-origin:0 0">なし</div>
<div class="sbx" style="left:1293px"></div>
<div class="t nashi" style="left:1296px;top:1031px;transform:scaleX(.8);transform-origin:0 0">なし</div>
<div class="t" id="s16" style="left:1371px;top:1031px;font-size:13px">16</div>
<div class="t" id="s6" style="left:1454px;top:1031px;font-size:13px">~6</div>
<div class="t" id="s5" style="left:1522px;top:1031px;font-size:13px">5%</div>
<div class="cb" style="left:1401px;top:1032px"></div>
<div class="cb" style="left:1483px;top:1032px"></div>
<div class="cb" style="left:1559px;top:1032px"></div>
<div class="cb" style="left:1626px;top:1033px"></div>
<div class="dd" style="left:1418px;top:1030px"></div>
<div class="dd" style="left:1500px;top:1030px"></div>
<div class="dd" style="left:1576px;top:1030px"></div>
<div class="dd" style="left:1643px;top:1032px"></div>
<div class="abs" style="left:1435px;top:1029px;width:1px;height:20px;background:#dcdcdc"></div>
<div class="abs" style="left:1519px;top:1029px;width:1px;height:20px;background:#dcdcdc"></div>
<div class="abs" style="left:1594px;top:1029px;width:1px;height:20px;background:#dcdcdc"></div>
<div class="abs" style="left:1659px;top:1029px;width:1px;height:20px;background:#dcdcdc"></div>
<svg class="abs" style="left:0;top:1026px" width="1680" height="24" viewBox="0 1026 1680 24"><path d="M1356.5 1033V1045.5H1369.5" stroke="#111" stroke-width="1.1" fill="none"/><path d="M1356.5 1036.5H1361.5M1356.5 1039.5H1364.5M1356.5 1042.5H1367.5M1359.5 1034.5V1045M1362.5 1037.5V1045M1365.5 1040.5V1045" stroke="#111" stroke-width=".8" fill="none"/><path d="M1438.8 1044.6L1444.6 1034.4L1450.6 1044.6ZM1438 1044.6H1451.6" stroke="#111" stroke-width="1.1" fill="none"/><path d="M1443.6 1034H1448.6V1035.6H1446Z M1448.2 1041.6H1451.4L1449.8 1043.6Z" fill="#111"/><path d="M1599.5 1032.5H1612L1613.5 1034V1046.5H1599.5Z" fill="#8c8c52" stroke="#4c4c28" stroke-width=".9"/><rect x="1602" y="1033" width="8.4" height="6" fill="#c8c8cc"/><rect x="1602.4" y="1041" width="8" height="5" fill="#44443a"/><path d="M1603.6 1041.4L1606.8 1045.2L1613 1037.6" stroke="#083a08" stroke-width="3.6" fill="none"/><path d="M1603.6 1041.4L1606.8 1045.2L1613 1037.6" stroke="#26d426" stroke-width="2" fill="none"/><path d="M1404.2 1038.4L1406.6 1041.8L1411.0 1034.6" stroke="#3c4e8c" stroke-width="1.8" fill="none"/><path d="M1486.2 1038.4L1488.6 1041.8L1493.0 1034.6" stroke="#3c4e8c" stroke-width="1.8" fill="none"/><path d="M1562.2 1038.4L1564.6 1041.8L1569.0 1034.6" stroke="#3c4e8c" stroke-width="1.8" fill="none"/><path d="M1629.2 1039.4L1631.6 1042.8L1636.0 1035.6" stroke="#3c4e8c" stroke-width="1.8" fill="none"/></svg>
</body></html>
